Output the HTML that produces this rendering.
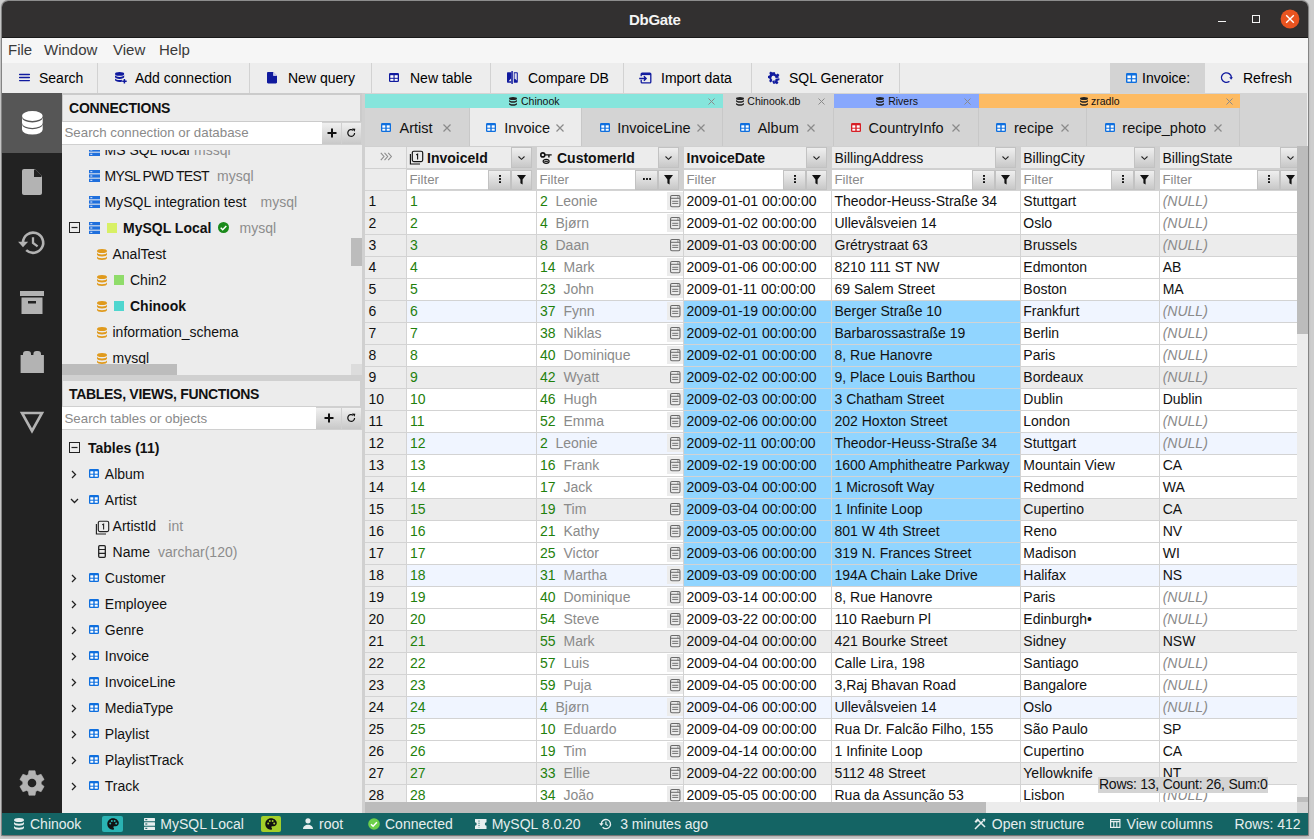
<!DOCTYPE html><html><head><meta charset="utf-8"><style>

html,body{margin:0;padding:0;}
body{width:1314px;height:839px;overflow:hidden;position:relative;background:#e9e9e9;font-family:"Liberation Sans", sans-serif;}
.t{position:absolute;white-space:nowrap;}
.b{position:absolute;}
svg.b{overflow:visible}
.grad{background:linear-gradient(to bottom,#f2f2f2,#c9c9c9);}

</style></head><body>
<div class="b" style="left:0px;top:0px;width:1314px;height:839px;background:#cdcdcd;"></div>
<div class="b" style="left:2px;top:1px;width:1306px;height:834px;box-shadow:0 0 0 1px rgba(0,0,0,0.28),0 1px 3px rgba(0,0,0,0.3);border-radius:6px 6px 0 0;background:#ececec;"></div>
<div class="b" style="left:2px;top:1px;width:1306px;height:37px;background:#323030;border-radius:6px 6px 0 0;"></div>
<div class="b" style="left:2px;top:37px;width:1306px;height:1px;background:#1a1a1a;"></div>
<div class="t " style="left:629px;top:10.00px;font-size:15px;line-height:20px;font-weight:700;color:#f4f4f4;letter-spacing:-0.3px;">DbGate</div>
<div class="b" style="left:1218px;top:20.8px;width:8px;height:1.5px;background:#f4f4f4;"></div>
<div class="b" style="left:1252px;top:15px;width:8px;height:8px;border:1.3px solid #f4f4f4;box-sizing:border-box;"></div>
<svg class="b" style="left:1280px;top:9px;" width="20" height="20" viewBox="0 0 20 20"><circle cx="10" cy="10" r="9.4" fill="#e95420"/><path d="M6.2 6.2 L13.8 13.8 M13.8 6.2 L6.2 13.8" stroke="#fff" stroke-width="1.4"/></svg>
<div class="b" style="left:2px;top:38px;width:1306px;height:25px;background:#f6f6f6;"></div>
<div class="t " style="left:8px;top:39.80px;font-size:15px;line-height:20px;font-weight:400;color:#3a3a3a;">File</div>
<div class="t " style="left:44px;top:39.80px;font-size:15px;line-height:20px;font-weight:400;color:#3a3a3a;">Window</div>
<div class="t " style="left:113px;top:39.80px;font-size:15px;line-height:20px;font-weight:400;color:#3a3a3a;">View</div>
<div class="t " style="left:159px;top:39.80px;font-size:15px;line-height:20px;font-weight:400;color:#3a3a3a;">Help</div>
<div class="b" style="left:2px;top:63px;width:1306px;height:30px;background:#ededed;"></div>
<div class="b" style="left:97px;top:63px;width:1px;height:30px;background:#d2d2d2;"></div>
<div class="b" style="left:249px;top:63px;width:1px;height:30px;background:#d2d2d2;"></div>
<div class="b" style="left:371px;top:63px;width:1px;height:30px;background:#d2d2d2;"></div>
<div class="b" style="left:490px;top:63px;width:1px;height:30px;background:#d2d2d2;"></div>
<div class="b" style="left:623px;top:63px;width:1px;height:30px;background:#d2d2d2;"></div>
<div class="b" style="left:751px;top:63px;width:1px;height:30px;background:#d2d2d2;"></div>
<div class="b" style="left:899px;top:63px;width:1px;height:30px;background:#d2d2d2;"></div>
<div class="b" style="left:1110px;top:63px;width:95px;height:30px;background:#d3d3d3;"></div>
<svg class="b" style="left:19px;top:73px;" width="11" height="9" viewBox="0 0 11 9"><path d="M0.6 1.5h9.8M0.6 4.5h9.8M0.6 7.6h9.8" stroke="#101a9e" stroke-width="1.3" stroke-linecap="round"/></svg>
<div class="t " style="left:39px;top:68.45px;font-size:14px;line-height:20px;font-weight:400;color:#000;">Search</div>
<svg class="b" style="left:114.5px;top:72.4px;" width="12" height="11.5" viewBox="0 0 12 11.5"><ellipse cx="4.6" cy="1.9" rx="4.6" ry="1.9" fill="#101a9e"/><path d="M0 3.1v1.9c0 1 2.1 1.9 4.6 1.9s4.6-.9 4.6-1.9V3.1c0 1-2.1 1.9-4.6 1.9S0 4.1 0 3.1z" fill="#101a9e"/><path d="M0 6.2v1.9c0 1 2.1 1.9 4.6 1.9.9 0 1.6-.1 2.3-.3V7.7c-.7.2-1.5.4-2.3.4C2.1 8.1 0 7.2 0 6.2z" fill="#101a9e"/><path d="M9.4 7v4.5M7.2 9.3h4.5" stroke="#101a9e" stroke-width="1.5"/></svg>
<div class="t " style="left:135px;top:68.45px;font-size:14px;line-height:20px;font-weight:400;color:#000;">Add connection</div>
<svg class="b" style="left:267px;top:72.4px;" width="10" height="11.5" viewBox="0 0 10 11.5"><path d="M0 1.2C0 .5.5 0 1.2 0H6.3L10 3.7v6.6c0 .7-.5 1.2-1.2 1.2H1.2C.5 11.5 0 11 0 10.3z" fill="#101a9e"/><path d="M6.3 0v3.7H10z" fill="#e8e8f4"/><path d="M6.3 0L10 3.7H6.3z" fill="#c8cbe8"/></svg>
<div class="t " style="left:288px;top:68.45px;font-size:14px;line-height:20px;font-weight:400;color:#000;">New query</div>
<svg class="b" style="left:389.1px;top:73px;" width="10" height="9" viewBox="0 0 10 9"><rect x="0" y="0" width="10" height="9" rx="1.3" fill="#101a9e"/><rect x="1.3" y="2.2" width="3.2" height="2.6" fill="#fff"/><rect x="5.6" y="2.2" width="3.1" height="2.6" fill="#fff"/><rect x="1.3" y="5.8" width="3.2" height="2" fill="#fff"/><rect x="5.6" y="5.8" width="3.1" height="2" fill="#fff"/></svg>
<div class="t " style="left:410px;top:68.45px;font-size:14px;line-height:20px;font-weight:400;color:#000;">New table</div>
<svg class="b" style="left:507.2px;top:71px;" width="11" height="13" viewBox="0 0 11 13"><path d="M1 1.2h3.5v10.6H1c-.6 0-1-.4-1-1V2.2c0-.6.4-1 1-1z" fill="#101a9e"/><path d="M1.6 10.2L4 7.6v2.6z" fill="#ededed"/><rect x="4.4" y="0" width="1.4" height="13" fill="#101a9e"/><path d="M6.8 1.2H9.8c.6 0 1 .4 1 1v8.6c0 .6-.4 1-1 1H6.8z" fill="#101a9e"/><path d="M7.6 2.3h2.2V9.6L7.6 7.2z" fill="#dfe0ee"/></svg>
<div class="t " style="left:528px;top:68.45px;font-size:14px;line-height:20px;font-weight:400;color:#000;">Compare DB</div>
<svg class="b" style="left:639px;top:72.8px;" width="12" height="10" viewBox="0 0 12 10"><path d="M2.2 3.2V1.1c0-.6.4-1 1-1h7.6c.6 0 1 .4 1 1v7.8c0 .6-.4 1-1 1H3.2c-.6 0-1-.4-1-1V6.8" stroke="#101a9e" stroke-width="1.3" fill="none"/><rect x="2.2" y="0.1" width="9.6" height="2" fill="#101a9e"/><path d="M0.2 5.5h6.6M4.9 3.3L7.1 5.5 4.9 7.7" stroke="#101a9e" stroke-width="1.4" fill="none"/></svg>
<div class="t " style="left:661px;top:68.45px;font-size:14px;line-height:20px;font-weight:400;color:#000;">Import data</div>
<svg class="b" style="left:768.2px;top:71.9px;" width="11.5" height="12" viewBox="0 0 11.5 12"><path d="M4.5 0h2.5l.4 1.8 1 .5 1.6-1 1.6 1.6-1 1.6.5 1L12 5.9v1.6" stroke="none" fill="none"/><path d="M4.6 0.2h2.4l.3 1.7 1.1.5L9.8 1.4l1.6 1.7-1 1.4.4 1.2-3.3.3A2.1 2.1 0 1 0 4.3 7.7L3.8 9.6 2.6 10.6 1.1 9 1.9 7.7 1.4 6.5 0 6.1V3.9L1.5 3.5 2 2.3 1.2.9 2.8-.5 4.2.6z" fill="#101a9e"/><path d="M7.6 6.8l3.8-.5v1.9l-1.6.4-.3.8 1 1.4-1.6 1.5-1.5-1-.9.4" fill="#101a9e"/><path d="M4.2 9.1l2.5-.9.2 3.6H5.2z" fill="#101a9e"/></svg>
<div class="t " style="left:789px;top:68.45px;font-size:14px;line-height:20px;font-weight:400;color:#000;">SQL Generator</div>
<svg class="b" style="left:1126px;top:73px;" width="11" height="10" viewBox="0 0 11 10"><rect x="0" y="0" width="11" height="10" rx="1.3" fill="#0f6fde"/><rect x="1.4" y="2.5" width="3.4" height="2.7" fill="#fff"/><rect x="6.2" y="2.5" width="3.4" height="2.7" fill="#fff"/><rect x="1.4" y="6.3" width="3.4" height="2.3" fill="#fff"/><rect x="6.2" y="6.3" width="3.4" height="2.3" fill="#fff"/></svg>
<div class="t " style="left:1142px;top:68.45px;font-size:14px;line-height:20px;font-weight:400;color:#000;">Invoice:</div>
<svg class="b" style="left:1221.3px;top:72.2px;" width="12" height="10.6" viewBox="0 0 12 10.6"><path d="M10.4 5.4A5 4.7 0 1 0 8 9.6" stroke="#101a9e" stroke-width="1.3" fill="none" stroke-linecap="round"/><path d="M8.3 5.3h3.6L10.1 7.8z" fill="#101a9e"/></svg>
<div class="t " style="left:1243px;top:68.45px;font-size:14px;line-height:20px;font-weight:400;color:#000;">Refresh</div>
<div class="b" style="left:2px;top:93px;width:60px;height:720px;background:#222222;"></div>
<div class="b" style="left:2px;top:93px;width:60px;height:60px;background:#565656;"></div>
<svg class="b" style="left:22px;top:111px;" width="21" height="24" viewBox="0 0 21 24"><ellipse cx="10.35" cy="5" rx="10.35" ry="5" fill="#fff"/><path d="M0 6.4A10.35 5 0 0 0 20.7 6.4V11.9A10.35 5 0 0 1 0 11.9Z" fill="#fff"/><path d="M0 13.2A10.35 5 0 0 0 20.7 13.2V18.6A10.35 5 0 0 1 0 18.6Z" fill="#fff"/></svg>
<svg class="b" style="left:22px;top:169px;" width="20" height="26" viewBox="0 0 20 26"><path d="M2 0h11l7 7v17c0 1.1-.9 2-2 2H2c-1.1 0-2-.9-2-2V2C0 .9.9 0 2 0z" fill="#b3b3b3"/><path d="M12 0v8h8z" fill="#222"/><path d="M13 0l7 7h-5.5c-.8 0-1.5-.7-1.5-1.5z" fill="#222"/></svg>
<svg class="b" style="left:15px;top:228px;" width="30" height="28" viewBox="0 0 30 28"><path d="M8 14.2A10.1 10.1 0 1 1 11.2 22.1" stroke="#b3b3b3" stroke-width="2.6" fill="none"/><path d="M3.1 13.8h10L8 19.3z" fill="#b3b3b3"/><path d="M18 9.3V15L22.6 18.4" stroke="#b3b3b3" stroke-width="2.3" fill="none"/></svg>
<svg class="b" style="left:20px;top:291px;" width="24" height="23" viewBox="0 0 24 23"><rect x="0" y="0" width="24" height="5" fill="#b3b3b3"/><path d="M1.5 6.5h21V23h-21z" fill="#b3b3b3"/><rect x="8" y="10" width="8" height="2.5" fill="#222"/></svg>
<svg class="b" style="left:20px;top:350px;" width="24" height="23" viewBox="0 0 24 23"><path d="M0.6 5H3V4A3 3 0 0 1 6 1H8A3 3 0 0 1 11 4V5H13.4V4A3 3 0 0 1 16.4 1H18A3 3 0 0 1 21 4V5H23.9V23H0.6Z" fill="#b3b3b3"/></svg>
<svg class="b" style="left:20px;top:411px;" width="24" height="22" viewBox="0 0 24 22"><path d="M2 2h20L12 20z" stroke="#b3b3b3" stroke-width="2.6" fill="none" stroke-linejoin="miter"/></svg>
<svg class="b" style="left:19px;top:770px;" width="26" height="26" viewBox="0 0 26 26"><path d="M9.26 4.60 L9.95 0.77 L16.05 0.77 L16.74 4.60 L17.60 5.03 L18.41 5.56 L18.41 5.56 L22.06 4.25 L25.11 9.53 L22.15 12.04 L22.20 13.00 L22.15 13.96 L22.15 13.96 L25.11 16.47 L22.06 21.75 L18.41 20.44 L17.60 20.97 L16.74 21.40 L16.74 21.40 L16.05 25.23 L9.95 25.23 L9.26 21.40 L8.40 20.97 L7.59 20.44 L7.59 20.44 L3.94 21.75 L0.89 16.47 L3.85 13.96 L3.80 13.00 L3.85 12.04 L3.85 12.04 L0.89 9.53 L3.94 4.25 L7.59 5.56 L8.40 5.03 L9.26 4.60Z" fill="#b3b3b3" stroke="#b3b3b3" stroke-width="0.6" stroke-linejoin="round"/><circle cx="13" cy="13" r="4.3" fill="#222"/></svg>
<div class="b" style="left:62px;top:93px;width:300px;height:720px;background:#ececec;"></div>
<div class="b" style="left:62px;top:93px;width:300px;height:29px;background:#cbcbcb;"></div>
<div class="b" style="left:63px;top:95px;width:297px;height:26px;background:#ececec;"></div>
<div class="t " style="left:69px;top:98.05px;font-size:14px;line-height:20px;font-weight:700;color:#111;letter-spacing:-0.2px;">CONNECTIONS</div>
<div class="b" style="left:62px;top:122px;width:300px;height:22px;background:#d0d0d0;"></div>
<div class="b" style="left:62px;top:122px;width:260px;height:22px;background:#fff;"></div>
<div class="b" style="left:62px;top:144px;width:300px;height:1px;background:#d0d0d0;"></div>
<div class="t " style="left:64.5px;top:122.99px;font-size:13.3px;line-height:20px;font-weight:400;color:#8a8a8a;">Search connection or database</div>
<div class="b" style="left:322px;top:123px;width:19px;height:21px;background:linear-gradient(to bottom,#f0f0f0,#c8c8c8);"></div>
<div class="b" style="left:342px;top:123px;width:19px;height:21px;background:linear-gradient(to bottom,#f0f0f0,#c8c8c8);"></div>
<svg class="b" style="left:327px;top:128px;" width="10" height="10" viewBox="0 0 10 10"><path d="M5 0.5v9M0.5 5h9" stroke="#111" stroke-width="2"/></svg>
<svg class="b" style="left:347px;top:128px;" width="9" height="10" viewBox="0 0 9 10"><path d="M7.6 5A3.4 3.4 0 1 1 6.2 2.2" stroke="#111" stroke-width="1.2" fill="none"/><path d="M5 0.5l3.3.3-.6 3z" fill="#111"/></svg>
<div class="b" style="left:62px;top:150px;width:300px;height:214px;overflow:hidden;">
<svg class="b" style="left:27px;top:-6px;" width="11" height="12" viewBox="0 0 11 12"><rect x="0" y="0" width="11" height="3.3" fill="#1f6fdc"/><rect x="0" y="4.35" width="11" height="3.3" fill="#1f6fdc"/><rect x="0" y="8.7" width="11" height="3.3" fill="#1f6fdc"/><rect x="1.3" y="1.1" width="2" height="1.1" fill="#cfe0ff"/><rect x="1.3" y="5.45" width="2" height="1.1" fill="#cfe0ff"/><rect x="1.3" y="9.8" width="2" height="1.1" fill="#cfe0ff"/></svg>
<div class="t " style="left:42.5px;top:-9.85px;font-size:14px;line-height:20px;font-weight:400;color:#111;">MS SQL local</div>
<svg class="b" style="left:27px;top:20px;" width="11" height="12" viewBox="0 0 11 12"><rect x="0" y="0" width="11" height="3.3" fill="#1f6fdc"/><rect x="0" y="4.35" width="11" height="3.3" fill="#1f6fdc"/><rect x="0" y="8.7" width="11" height="3.3" fill="#1f6fdc"/><rect x="1.3" y="1.1" width="2" height="1.1" fill="#cfe0ff"/><rect x="1.3" y="5.45" width="2" height="1.1" fill="#cfe0ff"/><rect x="1.3" y="9.8" width="2" height="1.1" fill="#cfe0ff"/></svg>
<div class="t " style="left:42.5px;top:16.15px;font-size:14px;line-height:20px;font-weight:400;color:#111;letter-spacing:-0.7px;">MYSL PWD TEST</div>
<svg class="b" style="left:27px;top:46px;" width="11" height="12" viewBox="0 0 11 12"><rect x="0" y="0" width="11" height="3.3" fill="#1f6fdc"/><rect x="0" y="4.35" width="11" height="3.3" fill="#1f6fdc"/><rect x="0" y="8.7" width="11" height="3.3" fill="#1f6fdc"/><rect x="1.3" y="1.1" width="2" height="1.1" fill="#cfe0ff"/><rect x="1.3" y="5.45" width="2" height="1.1" fill="#cfe0ff"/><rect x="1.3" y="9.8" width="2" height="1.1" fill="#cfe0ff"/></svg>
<div class="t " style="left:42.5px;top:42.15px;font-size:14px;line-height:20px;font-weight:400;color:#111;">MySQL integration test</div>
<div class="t " style="left:132px;top:-9.85px;font-size:14px;line-height:20px;font-weight:400;color:#8c8c8c;">mssql</div>
<div class="t " style="left:155px;top:16.15px;font-size:14px;line-height:20px;font-weight:400;color:#8c8c8c;">mysql</div>
<div class="t " style="left:198.5px;top:42.15px;font-size:14px;line-height:20px;font-weight:400;color:#8c8c8c;">mysql</div>
<svg class="b" style="left:7px;top:72px;" width="11" height="11" viewBox="0 0 11 11"><rect x="0.5" y="0.5" width="10" height="10" fill="none" stroke="#222" stroke-width="1"/><path d="M2.5 5.5h6" stroke="#222" stroke-width="1.2"/></svg>
<svg class="b" style="left:27px;top:72px;" width="11" height="12" viewBox="0 0 11 12"><rect x="0" y="0" width="11" height="3.3" fill="#1f6fdc"/><rect x="0" y="4.35" width="11" height="3.3" fill="#1f6fdc"/><rect x="0" y="8.7" width="11" height="3.3" fill="#1f6fdc"/><rect x="1.3" y="1.1" width="2" height="1.1" fill="#cfe0ff"/><rect x="1.3" y="5.45" width="2" height="1.1" fill="#cfe0ff"/><rect x="1.3" y="9.8" width="2" height="1.1" fill="#cfe0ff"/></svg>
<div class="b" style="left:45px;top:73px;width:10px;height:10px;background:#d8f065;"></div>
<div class="t " style="left:61px;top:68.15px;font-size:14px;line-height:20px;font-weight:700;color:#111;">MySQL Local</div>
<svg class="b" style="left:156px;top:72px;" width="11" height="11" viewBox="0 0 11 11"><circle cx="5.5" cy="5.5" r="5.5" fill="#1b8a1b"/><path d="M2.7 5.7l2 2 3.6-3.8" stroke="#fff" stroke-width="1.5" fill="none"/></svg>
<div class="t " style="left:177.5px;top:68.15px;font-size:14px;line-height:20px;font-weight:400;color:#8c8c8c;">mysql</div>
<svg class="b" style="left:35px;top:99px;" width="10" height="11" viewBox="0 0 10 11"><ellipse cx="5" cy="2" rx="5" ry="2" fill="#e09a1c"/><path d="M0 3.6v1.8c0 1.1 2.2 2 5 2s5-.9 5-2V3.6c0 1.1-2.2 2-5 2s-5-.9-5-2z" fill="#e09a1c"/><path d="M0 7.2v1.8c0 1.1 2.2 2 5 2s5-.9 5-2V7.2c0 1.1-2.2 2-5 2s-5-.9-5-2z" fill="#e09a1c"/></svg>
<div class="t " style="left:50.5px;top:94.15px;font-size:14px;line-height:20px;font-weight:400;color:#111;">AnalTest</div>
<svg class="b" style="left:35px;top:125px;" width="10" height="11" viewBox="0 0 10 11"><ellipse cx="5" cy="2" rx="5" ry="2" fill="#e09a1c"/><path d="M0 3.6v1.8c0 1.1 2.2 2 5 2s5-.9 5-2V3.6c0 1.1-2.2 2-5 2s-5-.9-5-2z" fill="#e09a1c"/><path d="M0 7.2v1.8c0 1.1 2.2 2 5 2s5-.9 5-2V7.2c0 1.1-2.2 2-5 2s-5-.9-5-2z" fill="#e09a1c"/></svg>
<div class="b" style="left:52px;top:125px;width:10px;height:10px;background:#8fdc6a;"></div>
<div class="t " style="left:68px;top:120.15px;font-size:14px;line-height:20px;font-weight:400;color:#111;">Chin2</div>
<svg class="b" style="left:35px;top:151px;" width="10" height="11" viewBox="0 0 10 11"><ellipse cx="5" cy="2" rx="5" ry="2" fill="#e09a1c"/><path d="M0 3.6v1.8c0 1.1 2.2 2 5 2s5-.9 5-2V3.6c0 1.1-2.2 2-5 2s-5-.9-5-2z" fill="#e09a1c"/><path d="M0 7.2v1.8c0 1.1 2.2 2 5 2s5-.9 5-2V7.2c0 1.1-2.2 2-5 2s-5-.9-5-2z" fill="#e09a1c"/></svg>
<div class="b" style="left:52px;top:151px;width:10px;height:10px;background:#4fd6cf;"></div>
<div class="t " style="left:68px;top:146.15px;font-size:14px;line-height:20px;font-weight:700;color:#111;">Chinook</div>
<svg class="b" style="left:35px;top:177px;" width="10" height="11" viewBox="0 0 10 11"><ellipse cx="5" cy="2" rx="5" ry="2" fill="#e09a1c"/><path d="M0 3.6v1.8c0 1.1 2.2 2 5 2s5-.9 5-2V3.6c0 1.1-2.2 2-5 2s-5-.9-5-2z" fill="#e09a1c"/><path d="M0 7.2v1.8c0 1.1 2.2 2 5 2s5-.9 5-2V7.2c0 1.1-2.2 2-5 2s-5-.9-5-2z" fill="#e09a1c"/></svg>
<div class="t " style="left:50.5px;top:172.15px;font-size:14px;line-height:20px;font-weight:400;color:#111;">information_schema</div>
<svg class="b" style="left:35px;top:203px;" width="10" height="11" viewBox="0 0 10 11"><ellipse cx="5" cy="2" rx="5" ry="2" fill="#e09a1c"/><path d="M0 3.6v1.8c0 1.1 2.2 2 5 2s5-.9 5-2V3.6c0 1.1-2.2 2-5 2s-5-.9-5-2z" fill="#e09a1c"/><path d="M0 7.2v1.8c0 1.1 2.2 2 5 2s5-.9 5-2V7.2c0 1.1-2.2 2-5 2s-5-.9-5-2z" fill="#e09a1c"/></svg>
<div class="t " style="left:50.5px;top:198.15px;font-size:14px;line-height:20px;font-weight:400;color:#111;">mysql</div>
</div>
<div class="b" style="left:351px;top:238px;width:11px;height:28px;background:#bcbcbc;"></div>
<div class="b" style="left:62px;top:364px;width:289px;height:11px;background:#ececec;"></div>
<div class="b" style="left:62px;top:364px;width:115px;height:11px;background:#bcbcbc;"></div>
<div class="b" style="left:351px;top:364px;width:11px;height:11px;background:#dcdcdc;"></div>
<div class="b" style="left:62px;top:375px;width:300px;height:5px;background:#d0d0d0;"></div>
<div class="b" style="left:362px;top:93px;width:3px;height:720px;background:#d0d0d0;"></div>
<div class="b" style="left:62px;top:380px;width:300px;height:27px;background:#d0d0d0;"></div>
<div class="b" style="left:63px;top:381px;width:297px;height:25px;background:#ececec;"></div>
<div class="t " style="left:69px;top:383.55px;font-size:14px;line-height:20px;font-weight:700;color:#111;letter-spacing:-0.3px;">TABLES, VIEWS, FUNCTIONS</div>
<div class="b" style="left:62px;top:407px;width:300px;height:23px;background:#d0d0d0;"></div>
<div class="b" style="left:62px;top:407px;width:254px;height:22px;background:#fff;"></div>
<div class="t " style="left:64.5px;top:408.89px;font-size:13.3px;line-height:20px;font-weight:400;color:#8a8a8a;">Search tables or objects</div>
<div class="b" style="left:316px;top:408px;width:25px;height:21px;background:linear-gradient(to bottom,#f0f0f0,#c8c8c8);"></div>
<div class="b" style="left:342px;top:408px;width:19px;height:21px;background:linear-gradient(to bottom,#f0f0f0,#c8c8c8);"></div>
<svg class="b" style="left:324px;top:413px;" width="10" height="10" viewBox="0 0 10 10"><path d="M5 0.5v9M0.5 5h9" stroke="#111" stroke-width="2"/></svg>
<svg class="b" style="left:347px;top:413px;" width="9" height="10" viewBox="0 0 9 10"><path d="M7.6 5A3.4 3.4 0 1 1 6.2 2.2" stroke="#111" stroke-width="1.2" fill="none"/><path d="M5 0.5l3.3.3-.6 3z" fill="#111"/></svg>
<svg class="b" style="left:69px;top:442px;" width="11" height="11" viewBox="0 0 11 11"><rect x="0.5" y="0.5" width="10" height="10" fill="none" stroke="#222" stroke-width="1"/><path d="M2.5 5.5h6" stroke="#222" stroke-width="1.2"/></svg>
<div class="t " style="left:88px;top:438.15px;font-size:14px;line-height:20px;font-weight:700;color:#111;">Tables (11)</div>
<svg class="b" style="left:71px;top:470px;" width="6" height="9" viewBox="0 0 6 9"><path d="M1 1l3.5 3.5L1 8" stroke="#222" stroke-width="1.3" fill="none"/></svg>
<svg class="b" style="left:89px;top:469px;" width="10" height="9" viewBox="0 0 10 9"><rect x="0" y="0" width="10" height="9" rx="1.3" fill="#0f6fde"/><rect x="1.3" y="2.3" width="3" height="2.4" fill="#fff"/><rect x="5.7" y="2.3" width="3" height="2.4" fill="#fff"/><rect x="1.3" y="5.7" width="3" height="2" fill="#fff"/><rect x="5.7" y="5.7" width="3" height="2" fill="#fff"/></svg>
<div class="t " style="left:104.8px;top:464.15px;font-size:14px;line-height:20px;font-weight:400;color:#111;">Album</div>
<svg class="b" style="left:70px;top:498px;" width="9" height="6" viewBox="0 0 9 6"><path d="M1 1l3.5 3.5L8 1" stroke="#222" stroke-width="1.3" fill="none"/></svg>
<svg class="b" style="left:89px;top:495px;" width="10" height="9" viewBox="0 0 10 9"><rect x="0" y="0" width="10" height="9" rx="1.3" fill="#0f6fde"/><rect x="1.3" y="2.3" width="3" height="2.4" fill="#fff"/><rect x="5.7" y="2.3" width="3" height="2.4" fill="#fff"/><rect x="1.3" y="5.7" width="3" height="2" fill="#fff"/><rect x="5.7" y="5.7" width="3" height="2" fill="#fff"/></svg>
<div class="t " style="left:104.8px;top:490.15px;font-size:14px;line-height:20px;font-weight:400;color:#111;">Artist</div>
<svg class="b" style="left:71px;top:574px;" width="6" height="9" viewBox="0 0 6 9"><path d="M1 1l3.5 3.5L1 8" stroke="#222" stroke-width="1.3" fill="none"/></svg>
<svg class="b" style="left:89px;top:573px;" width="10" height="9" viewBox="0 0 10 9"><rect x="0" y="0" width="10" height="9" rx="1.3" fill="#0f6fde"/><rect x="1.3" y="2.3" width="3" height="2.4" fill="#fff"/><rect x="5.7" y="2.3" width="3" height="2.4" fill="#fff"/><rect x="1.3" y="5.7" width="3" height="2" fill="#fff"/><rect x="5.7" y="5.7" width="3" height="2" fill="#fff"/></svg>
<div class="t " style="left:104.8px;top:568.15px;font-size:14px;line-height:20px;font-weight:400;color:#111;">Customer</div>
<svg class="b" style="left:71px;top:600px;" width="6" height="9" viewBox="0 0 6 9"><path d="M1 1l3.5 3.5L1 8" stroke="#222" stroke-width="1.3" fill="none"/></svg>
<svg class="b" style="left:89px;top:599px;" width="10" height="9" viewBox="0 0 10 9"><rect x="0" y="0" width="10" height="9" rx="1.3" fill="#0f6fde"/><rect x="1.3" y="2.3" width="3" height="2.4" fill="#fff"/><rect x="5.7" y="2.3" width="3" height="2.4" fill="#fff"/><rect x="1.3" y="5.7" width="3" height="2" fill="#fff"/><rect x="5.7" y="5.7" width="3" height="2" fill="#fff"/></svg>
<div class="t " style="left:104.8px;top:594.15px;font-size:14px;line-height:20px;font-weight:400;color:#111;">Employee</div>
<svg class="b" style="left:71px;top:626px;" width="6" height="9" viewBox="0 0 6 9"><path d="M1 1l3.5 3.5L1 8" stroke="#222" stroke-width="1.3" fill="none"/></svg>
<svg class="b" style="left:89px;top:625px;" width="10" height="9" viewBox="0 0 10 9"><rect x="0" y="0" width="10" height="9" rx="1.3" fill="#0f6fde"/><rect x="1.3" y="2.3" width="3" height="2.4" fill="#fff"/><rect x="5.7" y="2.3" width="3" height="2.4" fill="#fff"/><rect x="1.3" y="5.7" width="3" height="2" fill="#fff"/><rect x="5.7" y="5.7" width="3" height="2" fill="#fff"/></svg>
<div class="t " style="left:104.8px;top:620.15px;font-size:14px;line-height:20px;font-weight:400;color:#111;">Genre</div>
<svg class="b" style="left:71px;top:652px;" width="6" height="9" viewBox="0 0 6 9"><path d="M1 1l3.5 3.5L1 8" stroke="#222" stroke-width="1.3" fill="none"/></svg>
<svg class="b" style="left:89px;top:651px;" width="10" height="9" viewBox="0 0 10 9"><rect x="0" y="0" width="10" height="9" rx="1.3" fill="#0f6fde"/><rect x="1.3" y="2.3" width="3" height="2.4" fill="#fff"/><rect x="5.7" y="2.3" width="3" height="2.4" fill="#fff"/><rect x="1.3" y="5.7" width="3" height="2" fill="#fff"/><rect x="5.7" y="5.7" width="3" height="2" fill="#fff"/></svg>
<div class="t " style="left:104.8px;top:646.15px;font-size:14px;line-height:20px;font-weight:400;color:#111;">Invoice</div>
<svg class="b" style="left:71px;top:678px;" width="6" height="9" viewBox="0 0 6 9"><path d="M1 1l3.5 3.5L1 8" stroke="#222" stroke-width="1.3" fill="none"/></svg>
<svg class="b" style="left:89px;top:677px;" width="10" height="9" viewBox="0 0 10 9"><rect x="0" y="0" width="10" height="9" rx="1.3" fill="#0f6fde"/><rect x="1.3" y="2.3" width="3" height="2.4" fill="#fff"/><rect x="5.7" y="2.3" width="3" height="2.4" fill="#fff"/><rect x="1.3" y="5.7" width="3" height="2" fill="#fff"/><rect x="5.7" y="5.7" width="3" height="2" fill="#fff"/></svg>
<div class="t " style="left:104.8px;top:672.15px;font-size:14px;line-height:20px;font-weight:400;color:#111;">InvoiceLine</div>
<svg class="b" style="left:71px;top:704px;" width="6" height="9" viewBox="0 0 6 9"><path d="M1 1l3.5 3.5L1 8" stroke="#222" stroke-width="1.3" fill="none"/></svg>
<svg class="b" style="left:89px;top:703px;" width="10" height="9" viewBox="0 0 10 9"><rect x="0" y="0" width="10" height="9" rx="1.3" fill="#0f6fde"/><rect x="1.3" y="2.3" width="3" height="2.4" fill="#fff"/><rect x="5.7" y="2.3" width="3" height="2.4" fill="#fff"/><rect x="1.3" y="5.7" width="3" height="2" fill="#fff"/><rect x="5.7" y="5.7" width="3" height="2" fill="#fff"/></svg>
<div class="t " style="left:104.8px;top:698.15px;font-size:14px;line-height:20px;font-weight:400;color:#111;">MediaType</div>
<svg class="b" style="left:71px;top:730px;" width="6" height="9" viewBox="0 0 6 9"><path d="M1 1l3.5 3.5L1 8" stroke="#222" stroke-width="1.3" fill="none"/></svg>
<svg class="b" style="left:89px;top:729px;" width="10" height="9" viewBox="0 0 10 9"><rect x="0" y="0" width="10" height="9" rx="1.3" fill="#0f6fde"/><rect x="1.3" y="2.3" width="3" height="2.4" fill="#fff"/><rect x="5.7" y="2.3" width="3" height="2.4" fill="#fff"/><rect x="1.3" y="5.7" width="3" height="2" fill="#fff"/><rect x="5.7" y="5.7" width="3" height="2" fill="#fff"/></svg>
<div class="t " style="left:104.8px;top:724.15px;font-size:14px;line-height:20px;font-weight:400;color:#111;">Playlist</div>
<svg class="b" style="left:71px;top:756px;" width="6" height="9" viewBox="0 0 6 9"><path d="M1 1l3.5 3.5L1 8" stroke="#222" stroke-width="1.3" fill="none"/></svg>
<svg class="b" style="left:89px;top:755px;" width="10" height="9" viewBox="0 0 10 9"><rect x="0" y="0" width="10" height="9" rx="1.3" fill="#0f6fde"/><rect x="1.3" y="2.3" width="3" height="2.4" fill="#fff"/><rect x="5.7" y="2.3" width="3" height="2.4" fill="#fff"/><rect x="1.3" y="5.7" width="3" height="2" fill="#fff"/><rect x="5.7" y="5.7" width="3" height="2" fill="#fff"/></svg>
<div class="t " style="left:104.8px;top:750.15px;font-size:14px;line-height:20px;font-weight:400;color:#111;">PlaylistTrack</div>
<svg class="b" style="left:71px;top:782px;" width="6" height="9" viewBox="0 0 6 9"><path d="M1 1l3.5 3.5L1 8" stroke="#222" stroke-width="1.3" fill="none"/></svg>
<svg class="b" style="left:89px;top:781px;" width="10" height="9" viewBox="0 0 10 9"><rect x="0" y="0" width="10" height="9" rx="1.3" fill="#0f6fde"/><rect x="1.3" y="2.3" width="3" height="2.4" fill="#fff"/><rect x="5.7" y="2.3" width="3" height="2.4" fill="#fff"/><rect x="1.3" y="5.7" width="3" height="2" fill="#fff"/><rect x="5.7" y="5.7" width="3" height="2" fill="#fff"/></svg>
<div class="t " style="left:104.8px;top:776.15px;font-size:14px;line-height:20px;font-weight:400;color:#111;">Track</div>
<svg class="b" style="left:95px;top:519.5px;" width="15" height="15" viewBox="0 0 15 15"><rect x="3.3" y="1.2" width="10.4" height="10.4" rx="1.5" fill="none" stroke="#222" stroke-width="1.15"/><path d="M1.4 4V14H11" stroke="#222" stroke-width="1.15" fill="none"/><path d="M7.2 4.8L8.6 4.2V9.6" stroke="#222" stroke-width="1.1" fill="none"/></svg>
<div class="t " style="left:112.6px;top:516.15px;font-size:14px;line-height:20px;font-weight:400;color:#111;">ArtistId</div>
<div class="t " style="left:168.3px;top:516.15px;font-size:14px;line-height:20px;font-weight:400;color:#8c8c8c;">int</div>
<svg class="b" style="left:98px;top:545px;" width="8" height="13" viewBox="0 0 8 13"><rect x="0.7" y="0.7" width="6.6" height="11.6" rx="1" fill="none" stroke="#222" stroke-width="1.3"/><path d="M0.7 4.5h6.6M0.7 8.3h6.6" stroke="#222" stroke-width="1.2"/></svg>
<div class="t " style="left:112.6px;top:542.15px;font-size:14px;line-height:20px;font-weight:400;color:#111;">Name</div>
<div class="t " style="left:158px;top:542.15px;font-size:14px;line-height:20px;font-weight:400;color:#8c8c8c;">varchar(120)</div>
<div class="b" style="left:365px;top:93px;width:943px;height:720px;background:#d4d4d4;"></div>
<div class="b" style="left:365px;top:94px;width:358px;height:14px;background:#86e5dc;"></div>
<svg class="b" style="left:509px;top:96.8px;" width="8" height="9" viewBox="0 0 8 9"><ellipse cx="4" cy="1.5" rx="4" ry="1.5" fill="#222"/><path d="M0 2.8v1.5c0 .8 1.8 1.5 4 1.5s4-.7 4-1.5V2.8c0 .8-1.8 1.5-4 1.5S0 3.6 0 2.8z" fill="#222"/><path d="M0 5.7v1.5c0 .8 1.8 1.5 4 1.5s4-.7 4-1.5V5.7c0 .8-1.8 1.5-4 1.5S0 6.5 0 5.7z" fill="#222"/></svg>
<div class="t " style="left:521px;top:91.16px;font-size:10.5px;line-height:20px;font-weight:400;color:#111;">Chinook</div>
<svg class="b" style="left:708px;top:97.5px;" width="7" height="7" viewBox="0 0 7 7"><path d="M0.5 0.5L6.5 6.5M6.5 0.5L0.5 6.5" stroke="#8a8a8a" stroke-width="1"/></svg>
<div class="b" style="left:723px;top:94px;width:111px;height:14px;background:#d4d4d4;"></div>
<svg class="b" style="left:735.5px;top:96.8px;" width="8" height="9" viewBox="0 0 8 9"><ellipse cx="4" cy="1.5" rx="4" ry="1.5" fill="#222"/><path d="M0 2.8v1.5c0 .8 1.8 1.5 4 1.5s4-.7 4-1.5V2.8c0 .8-1.8 1.5-4 1.5S0 3.6 0 2.8z" fill="#222"/><path d="M0 5.7v1.5c0 .8 1.8 1.5 4 1.5s4-.7 4-1.5V5.7c0 .8-1.8 1.5-4 1.5S0 6.5 0 5.7z" fill="#222"/></svg>
<div class="t " style="left:747.3px;top:91.16px;font-size:10.5px;line-height:20px;font-weight:400;color:#111;">Chinook.db</div>
<svg class="b" style="left:818px;top:97.5px;" width="7" height="7" viewBox="0 0 7 7"><path d="M0.5 0.5L6.5 6.5M6.5 0.5L0.5 6.5" stroke="#8a8a8a" stroke-width="1"/></svg>
<div class="b" style="left:834px;top:94px;width:145px;height:14px;background:#88a8fd;"></div>
<svg class="b" style="left:876.4px;top:96.8px;" width="8" height="9" viewBox="0 0 8 9"><ellipse cx="4" cy="1.5" rx="4" ry="1.5" fill="#222"/><path d="M0 2.8v1.5c0 .8 1.8 1.5 4 1.5s4-.7 4-1.5V2.8c0 .8-1.8 1.5-4 1.5S0 3.6 0 2.8z" fill="#222"/><path d="M0 5.7v1.5c0 .8 1.8 1.5 4 1.5s4-.7 4-1.5V5.7c0 .8-1.8 1.5-4 1.5S0 6.5 0 5.7z" fill="#222"/></svg>
<div class="t " style="left:888.2px;top:91.16px;font-size:10.5px;line-height:20px;font-weight:400;color:#111;">Rivers</div>
<svg class="b" style="left:963.6px;top:97.5px;" width="7" height="7" viewBox="0 0 7 7"><path d="M0.5 0.5L6.5 6.5M6.5 0.5L0.5 6.5" stroke="#8a8a8a" stroke-width="1"/></svg>
<div class="b" style="left:979px;top:94px;width:261px;height:14px;background:#fdbb63;"></div>
<svg class="b" style="left:1079.6px;top:96.8px;" width="8" height="9" viewBox="0 0 8 9"><ellipse cx="4" cy="1.5" rx="4" ry="1.5" fill="#222"/><path d="M0 2.8v1.5c0 .8 1.8 1.5 4 1.5s4-.7 4-1.5V2.8c0 .8-1.8 1.5-4 1.5S0 3.6 0 2.8z" fill="#222"/><path d="M0 5.7v1.5c0 .8 1.8 1.5 4 1.5s4-.7 4-1.5V5.7c0 .8-1.8 1.5-4 1.5S0 6.5 0 5.7z" fill="#222"/></svg>
<div class="t " style="left:1091px;top:91.16px;font-size:10.5px;line-height:20px;font-weight:400;color:#111;">zradlo</div>
<svg class="b" style="left:1225.5px;top:97.5px;" width="7" height="7" viewBox="0 0 7 7"><path d="M0.5 0.5L6.5 6.5M6.5 0.5L0.5 6.5" stroke="#8a8a8a" stroke-width="1"/></svg>
<div class="b" style="left:365px;top:108px;width:105px;height:38px;background:#d4d4d4;"></div>
<div class="b" style="left:469px;top:108px;width:1px;height:38px;background:#c8c8c8;"></div>
<svg class="b" style="left:381.4px;top:123px;" width="10" height="9" viewBox="0 0 10 9"><rect x="0" y="0" width="10" height="9" rx="1.3" fill="#0f6fde"/><rect x="1.3" y="2.3" width="3" height="2.4" fill="#fff"/><rect x="5.7" y="2.3" width="3" height="2.4" fill="#fff"/><rect x="1.3" y="5.7" width="3" height="2" fill="#fff"/><rect x="5.7" y="5.7" width="3" height="2" fill="#fff"/></svg>
<div class="t " style="left:399.6px;top:117.68px;font-size:14.5px;line-height:20px;font-weight:400;color:#111;">Artist</div>
<svg class="b" style="left:442.8px;top:124px;" width="8" height="8" viewBox="0 0 8 8"><path d="M0.5 0.5L7.5 7.5M7.5 0.5L0.5 7.5" stroke="#8a8a8a" stroke-width="1.2"/></svg>
<div class="b" style="left:470px;top:108px;width:112px;height:38px;background:#ececec;"></div>
<div class="b" style="left:581px;top:108px;width:1px;height:38px;background:#c8c8c8;"></div>
<svg class="b" style="left:486.3px;top:123px;" width="10" height="9" viewBox="0 0 10 9"><rect x="0" y="0" width="10" height="9" rx="1.3" fill="#0f6fde"/><rect x="1.3" y="2.3" width="3" height="2.4" fill="#fff"/><rect x="5.7" y="2.3" width="3" height="2.4" fill="#fff"/><rect x="1.3" y="5.7" width="3" height="2" fill="#fff"/><rect x="5.7" y="5.7" width="3" height="2" fill="#fff"/></svg>
<div class="t " style="left:504.2px;top:117.68px;font-size:14.5px;line-height:20px;font-weight:400;color:#111;">Invoice</div>
<svg class="b" style="left:556px;top:124px;" width="8" height="8" viewBox="0 0 8 8"><path d="M0.5 0.5L7.5 7.5M7.5 0.5L0.5 7.5" stroke="#8a8a8a" stroke-width="1.2"/></svg>
<div class="b" style="left:582px;top:108px;width:141px;height:38px;background:#d4d4d4;"></div>
<div class="b" style="left:722px;top:108px;width:1px;height:38px;background:#c8c8c8;"></div>
<svg class="b" style="left:600px;top:123px;" width="10" height="9" viewBox="0 0 10 9"><rect x="0" y="0" width="10" height="9" rx="1.3" fill="#0f6fde"/><rect x="1.3" y="2.3" width="3" height="2.4" fill="#fff"/><rect x="5.7" y="2.3" width="3" height="2.4" fill="#fff"/><rect x="1.3" y="5.7" width="3" height="2" fill="#fff"/><rect x="5.7" y="5.7" width="3" height="2" fill="#fff"/></svg>
<div class="t " style="left:617.2px;top:117.68px;font-size:14.5px;line-height:20px;font-weight:400;color:#111;">InvoiceLine</div>
<svg class="b" style="left:696.7px;top:124px;" width="8" height="8" viewBox="0 0 8 8"><path d="M0.5 0.5L7.5 7.5M7.5 0.5L0.5 7.5" stroke="#8a8a8a" stroke-width="1.2"/></svg>
<div class="b" style="left:723px;top:108px;width:111px;height:38px;background:#d4d4d4;"></div>
<div class="b" style="left:833px;top:108px;width:1px;height:38px;background:#c8c8c8;"></div>
<svg class="b" style="left:740px;top:123px;" width="10" height="9" viewBox="0 0 10 9"><rect x="0" y="0" width="10" height="9" rx="1.3" fill="#0f6fde"/><rect x="1.3" y="2.3" width="3" height="2.4" fill="#fff"/><rect x="5.7" y="2.3" width="3" height="2.4" fill="#fff"/><rect x="1.3" y="5.7" width="3" height="2" fill="#fff"/><rect x="5.7" y="5.7" width="3" height="2" fill="#fff"/></svg>
<div class="t " style="left:757.7px;top:117.68px;font-size:14.5px;line-height:20px;font-weight:400;color:#111;">Album</div>
<svg class="b" style="left:806.6px;top:124px;" width="8" height="8" viewBox="0 0 8 8"><path d="M0.5 0.5L7.5 7.5M7.5 0.5L0.5 7.5" stroke="#8a8a8a" stroke-width="1.2"/></svg>
<div class="b" style="left:834px;top:108px;width:145px;height:38px;background:#d4d4d4;"></div>
<div class="b" style="left:978px;top:108px;width:1px;height:38px;background:#c8c8c8;"></div>
<svg class="b" style="left:850.8px;top:123px;" width="10" height="9" viewBox="0 0 10 9"><rect x="0" y="0" width="10" height="9" rx="1.3" fill="#d71f26"/><rect x="1.3" y="2.3" width="3" height="2.4" fill="#fff"/><rect x="5.7" y="2.3" width="3" height="2.4" fill="#fff"/><rect x="1.3" y="5.7" width="3" height="2" fill="#fff"/><rect x="5.7" y="5.7" width="3" height="2" fill="#fff"/></svg>
<div class="t " style="left:868.6px;top:117.68px;font-size:14.5px;line-height:20px;font-weight:400;color:#111;">CountryInfo</div>
<svg class="b" style="left:952.3px;top:124px;" width="8" height="8" viewBox="0 0 8 8"><path d="M0.5 0.5L7.5 7.5M7.5 0.5L0.5 7.5" stroke="#8a8a8a" stroke-width="1.2"/></svg>
<div class="b" style="left:979px;top:108px;width:108px;height:38px;background:#d4d4d4;"></div>
<div class="b" style="left:1086px;top:108px;width:1px;height:38px;background:#c8c8c8;"></div>
<svg class="b" style="left:996.2px;top:123px;" width="10" height="9" viewBox="0 0 10 9"><rect x="0" y="0" width="10" height="9" rx="1.3" fill="#0f6fde"/><rect x="1.3" y="2.3" width="3" height="2.4" fill="#fff"/><rect x="5.7" y="2.3" width="3" height="2.4" fill="#fff"/><rect x="1.3" y="5.7" width="3" height="2" fill="#fff"/><rect x="5.7" y="5.7" width="3" height="2" fill="#fff"/></svg>
<div class="t " style="left:1014px;top:117.68px;font-size:14.5px;line-height:20px;font-weight:400;color:#111;">recipe</div>
<svg class="b" style="left:1061.1px;top:124px;" width="8" height="8" viewBox="0 0 8 8"><path d="M0.5 0.5L7.5 7.5M7.5 0.5L0.5 7.5" stroke="#8a8a8a" stroke-width="1.2"/></svg>
<div class="b" style="left:1087px;top:108px;width:153px;height:38px;background:#d4d4d4;"></div>
<div class="b" style="left:1239px;top:108px;width:1px;height:38px;background:#c8c8c8;"></div>
<svg class="b" style="left:1105px;top:123px;" width="10" height="9" viewBox="0 0 10 9"><rect x="0" y="0" width="10" height="9" rx="1.3" fill="#0f6fde"/><rect x="1.3" y="2.3" width="3" height="2.4" fill="#fff"/><rect x="5.7" y="2.3" width="3" height="2.4" fill="#fff"/><rect x="1.3" y="5.7" width="3" height="2" fill="#fff"/><rect x="5.7" y="5.7" width="3" height="2" fill="#fff"/></svg>
<div class="t " style="left:1122.3px;top:117.68px;font-size:14.5px;line-height:20px;font-weight:400;color:#111;">recipe_photo</div>
<svg class="b" style="left:1214.3px;top:124px;" width="8" height="8" viewBox="0 0 8 8"><path d="M0.5 0.5L7.5 7.5M7.5 0.5L0.5 7.5" stroke="#8a8a8a" stroke-width="1.2"/></svg>
<div class="b" style="left:1307px;top:93px;width:1px;height:720px;background:#f0f0f0;"></div>
<div class="b" style="left:365px;top:146px;width:932px;height:656px;overflow:hidden;background:#fff;">
<div class="b" style="left:0px;top:0px;width:940px;height:44px;background:#d0d0d0;"></div>
<div class="b" style="left:0px;top:1px;width:41px;height:21px;background:#ececec;"></div>
<div class="b" style="left:0px;top:23px;width:41px;height:21px;background:#ececec;"></div>
<div class="b" style="left:42px;top:1px;width:125px;height:21px;background:#ececec;"></div>
<div class="b" style="left:145.5px;top:1px;width:21.5px;height:21px;background:linear-gradient(to bottom,#f1f1f1 0%,#dadada 55%,#c6c6c6 100%);box-shadow:inset 0 0 0 1px #c2c2c2;"></div>
<svg class="b" style="left:153.29999999999995px;top:10px;" width="7" height="4" viewBox="0 0 7 4"><path d="M0.5 0.5L3.5 3.3 6.5 0.5" stroke="#222" stroke-width="1.05" fill="none"/></svg>
<div class="b" style="left:42px;top:24px;width:81px;height:19px;background:#fff;"></div>
<div class="b" style="left:123px;top:23.5px;width:22.5px;height:20px;background:linear-gradient(to bottom,#f1f1f1 0%,#dadada 55%,#c6c6c6 100%);box-shadow:inset 0 0 0 1px #c2c2c2;"></div>
<div class="b" style="left:145.5px;top:23.5px;width:21.5px;height:20px;background:linear-gradient(to bottom,#f1f1f1 0%,#dadada 55%,#c6c6c6 100%);box-shadow:inset 0 0 0 1px #c2c2c2;"></div>
<div class="t " style="left:44.5px;top:23.89px;font-size:13.3px;line-height:20px;font-weight:400;color:#8a8a8a;">Filter</div>
<svg class="b" style="left:151.70000000000005px;top:29px;" width="9" height="10" viewBox="0 0 9 10"><path d="M0 0h9L5.6 4.6V9.6L3.4 8.2V4.6z" fill="#111"/></svg>
<svg class="b" style="left:133.89999999999998px;top:29.19999999999999px;" width="2" height="8" viewBox="0 0 2 8"><rect x="0" y="0" width="2" height="1.8" fill="#111"/><rect x="0" y="3.1" width="2" height="1.8" fill="#111"/><rect x="0" y="6.2" width="2" height="1.8" fill="#111"/></svg>
<div class="b" style="left:172px;top:1px;width:142px;height:21px;background:#ececec;"></div>
<div class="b" style="left:292.5px;top:1px;width:21.5px;height:21px;background:linear-gradient(to bottom,#f1f1f1 0%,#dadada 55%,#c6c6c6 100%);box-shadow:inset 0 0 0 1px #c2c2c2;"></div>
<svg class="b" style="left:300.29999999999995px;top:10px;" width="7" height="4" viewBox="0 0 7 4"><path d="M0.5 0.5L3.5 3.3 6.5 0.5" stroke="#222" stroke-width="1.05" fill="none"/></svg>
<div class="b" style="left:172px;top:24px;width:98px;height:19px;background:#fff;"></div>
<div class="b" style="left:270px;top:23.5px;width:22.5px;height:20px;background:linear-gradient(to bottom,#f1f1f1 0%,#dadada 55%,#c6c6c6 100%);box-shadow:inset 0 0 0 1px #c2c2c2;"></div>
<div class="b" style="left:292.5px;top:23.5px;width:21.5px;height:20px;background:linear-gradient(to bottom,#f1f1f1 0%,#dadada 55%,#c6c6c6 100%);box-shadow:inset 0 0 0 1px #c2c2c2;"></div>
<div class="t " style="left:174.5px;top:23.89px;font-size:13.3px;line-height:20px;font-weight:400;color:#8a8a8a;">Filter</div>
<svg class="b" style="left:298.70000000000005px;top:29px;" width="9" height="10" viewBox="0 0 9 10"><path d="M0 0h9L5.6 4.6V9.6L3.4 8.2V4.6z" fill="#111"/></svg>
<svg class="b" style="left:277.70000000000005px;top:32.19999999999999px;" width="8" height="2" viewBox="0 0 8 2"><rect x="0" y="0" width="1.8" height="2" fill="#111"/><rect x="3.1" y="0" width="1.8" height="2" fill="#111"/><rect x="6.2" y="0" width="1.8" height="2" fill="#111"/></svg>
<div class="b" style="left:319px;top:1px;width:143px;height:21px;background:#ececec;"></div>
<div class="b" style="left:440.5px;top:1px;width:21.5px;height:21px;background:linear-gradient(to bottom,#f1f1f1 0%,#dadada 55%,#c6c6c6 100%);box-shadow:inset 0 0 0 1px #c2c2c2;"></div>
<svg class="b" style="left:448.29999999999995px;top:10px;" width="7" height="4" viewBox="0 0 7 4"><path d="M0.5 0.5L3.5 3.3 6.5 0.5" stroke="#222" stroke-width="1.05" fill="none"/></svg>
<div class="b" style="left:319px;top:24px;width:99px;height:19px;background:#fff;"></div>
<div class="b" style="left:418px;top:23.5px;width:22.5px;height:20px;background:linear-gradient(to bottom,#f1f1f1 0%,#dadada 55%,#c6c6c6 100%);box-shadow:inset 0 0 0 1px #c2c2c2;"></div>
<div class="b" style="left:440.5px;top:23.5px;width:21.5px;height:20px;background:linear-gradient(to bottom,#f1f1f1 0%,#dadada 55%,#c6c6c6 100%);box-shadow:inset 0 0 0 1px #c2c2c2;"></div>
<div class="t " style="left:321.5px;top:23.89px;font-size:13.3px;line-height:20px;font-weight:400;color:#8a8a8a;">Filter</div>
<svg class="b" style="left:446.70000000000005px;top:29px;" width="9" height="10" viewBox="0 0 9 10"><path d="M0 0h9L5.6 4.6V9.6L3.4 8.2V4.6z" fill="#111"/></svg>
<svg class="b" style="left:428.9px;top:29.19999999999999px;" width="2" height="8" viewBox="0 0 2 8"><rect x="0" y="0" width="2" height="1.8" fill="#111"/><rect x="0" y="3.1" width="2" height="1.8" fill="#111"/><rect x="0" y="6.2" width="2" height="1.8" fill="#111"/></svg>
<div class="b" style="left:467px;top:1px;width:184px;height:21px;background:#ececec;"></div>
<div class="b" style="left:629.5px;top:1px;width:21.5px;height:21px;background:linear-gradient(to bottom,#f1f1f1 0%,#dadada 55%,#c6c6c6 100%);box-shadow:inset 0 0 0 1px #c2c2c2;"></div>
<svg class="b" style="left:637.3px;top:10px;" width="7" height="4" viewBox="0 0 7 4"><path d="M0.5 0.5L3.5 3.3 6.5 0.5" stroke="#222" stroke-width="1.05" fill="none"/></svg>
<div class="b" style="left:467px;top:24px;width:140px;height:19px;background:#fff;"></div>
<div class="b" style="left:607px;top:23.5px;width:22.5px;height:20px;background:linear-gradient(to bottom,#f1f1f1 0%,#dadada 55%,#c6c6c6 100%);box-shadow:inset 0 0 0 1px #c2c2c2;"></div>
<div class="b" style="left:629.5px;top:23.5px;width:21.5px;height:20px;background:linear-gradient(to bottom,#f1f1f1 0%,#dadada 55%,#c6c6c6 100%);box-shadow:inset 0 0 0 1px #c2c2c2;"></div>
<div class="t " style="left:469.5px;top:23.89px;font-size:13.3px;line-height:20px;font-weight:400;color:#8a8a8a;">Filter</div>
<svg class="b" style="left:635.7px;top:29px;" width="9" height="10" viewBox="0 0 9 10"><path d="M0 0h9L5.6 4.6V9.6L3.4 8.2V4.6z" fill="#111"/></svg>
<svg class="b" style="left:617.9px;top:29.19999999999999px;" width="2" height="8" viewBox="0 0 2 8"><rect x="0" y="0" width="2" height="1.8" fill="#111"/><rect x="0" y="3.1" width="2" height="1.8" fill="#111"/><rect x="0" y="6.2" width="2" height="1.8" fill="#111"/></svg>
<div class="b" style="left:656px;top:1px;width:134px;height:21px;background:#ececec;"></div>
<div class="b" style="left:768.5px;top:1px;width:21.5px;height:21px;background:linear-gradient(to bottom,#f1f1f1 0%,#dadada 55%,#c6c6c6 100%);box-shadow:inset 0 0 0 1px #c2c2c2;"></div>
<svg class="b" style="left:776.3px;top:10px;" width="7" height="4" viewBox="0 0 7 4"><path d="M0.5 0.5L3.5 3.3 6.5 0.5" stroke="#222" stroke-width="1.05" fill="none"/></svg>
<div class="b" style="left:656px;top:24px;width:90px;height:19px;background:#fff;"></div>
<div class="b" style="left:746px;top:23.5px;width:22.5px;height:20px;background:linear-gradient(to bottom,#f1f1f1 0%,#dadada 55%,#c6c6c6 100%);box-shadow:inset 0 0 0 1px #c2c2c2;"></div>
<div class="b" style="left:768.5px;top:23.5px;width:21.5px;height:20px;background:linear-gradient(to bottom,#f1f1f1 0%,#dadada 55%,#c6c6c6 100%);box-shadow:inset 0 0 0 1px #c2c2c2;"></div>
<div class="t " style="left:658.5px;top:23.89px;font-size:13.3px;line-height:20px;font-weight:400;color:#8a8a8a;">Filter</div>
<svg class="b" style="left:774.7px;top:29px;" width="9" height="10" viewBox="0 0 9 10"><path d="M0 0h9L5.6 4.6V9.6L3.4 8.2V4.6z" fill="#111"/></svg>
<svg class="b" style="left:756.9000000000001px;top:29.19999999999999px;" width="2" height="8" viewBox="0 0 2 8"><rect x="0" y="0" width="2" height="1.8" fill="#111"/><rect x="0" y="3.1" width="2" height="1.8" fill="#111"/><rect x="0" y="6.2" width="2" height="1.8" fill="#111"/></svg>
<div class="b" style="left:795px;top:1px;width:141px;height:21px;background:#ececec;"></div>
<div class="b" style="left:914.5px;top:1px;width:21.5px;height:21px;background:linear-gradient(to bottom,#f1f1f1 0%,#dadada 55%,#c6c6c6 100%);box-shadow:inset 0 0 0 1px #c2c2c2;"></div>
<svg class="b" style="left:922.3px;top:10px;" width="7" height="4" viewBox="0 0 7 4"><path d="M0.5 0.5L3.5 3.3 6.5 0.5" stroke="#222" stroke-width="1.05" fill="none"/></svg>
<div class="b" style="left:795px;top:24px;width:97px;height:19px;background:#fff;"></div>
<div class="b" style="left:892px;top:23.5px;width:22.5px;height:20px;background:linear-gradient(to bottom,#f1f1f1 0%,#dadada 55%,#c6c6c6 100%);box-shadow:inset 0 0 0 1px #c2c2c2;"></div>
<div class="b" style="left:914.5px;top:23.5px;width:21.5px;height:20px;background:linear-gradient(to bottom,#f1f1f1 0%,#dadada 55%,#c6c6c6 100%);box-shadow:inset 0 0 0 1px #c2c2c2;"></div>
<div class="t " style="left:797.5px;top:23.89px;font-size:13.3px;line-height:20px;font-weight:400;color:#8a8a8a;">Filter</div>
<svg class="b" style="left:920.7px;top:29px;" width="9" height="10" viewBox="0 0 9 10"><path d="M0 0h9L5.6 4.6V9.6L3.4 8.2V4.6z" fill="#111"/></svg>
<svg class="b" style="left:902.9000000000001px;top:29.19999999999999px;" width="2" height="8" viewBox="0 0 2 8"><rect x="0" y="0" width="2" height="1.8" fill="#111"/><rect x="0" y="3.1" width="2" height="1.8" fill="#111"/><rect x="0" y="6.2" width="2" height="1.8" fill="#111"/></svg>
<svg class="b" style="left:15px;top:6px;" width="12" height="9" viewBox="0 0 12 9"><path d="M0.8 0.8l3.2 3.7-3.2 3.7M4.5 0.8l3.2 3.7-3.2 3.7M8.2 0.8l3.2 3.7-3.2 3.7" stroke="#8c8c8c" stroke-width="1.1" fill="none"/></svg>
<svg class="b" style="left:44px;top:4px;" width="15" height="15" viewBox="0 0 15 15"><rect x="3.3" y="1.2" width="10.4" height="10.4" rx="1.5" fill="none" stroke="#111" stroke-width="1.15"/><path d="M1.4 4V14H11" stroke="#111" stroke-width="1.15" fill="none"/><path d="M7.2 4.8L8.6 4.2V9.6" stroke="#111" stroke-width="1.1" fill="none"/></svg>
<div class="t " style="left:62px;top:1.75px;font-size:14px;line-height:20px;font-weight:700;color:#111;">InvoiceId</div>
<svg class="b" style="left:174px;top:5px;" width="14" height="13" viewBox="0 0 14 13"><circle cx="3.8" cy="3.9" r="2" fill="none" stroke="#111" stroke-width="1.6"/><path d="M5.8 3.9H12.7M9.9 3.9V6.5" stroke="#111" stroke-width="1.4"/><ellipse cx="7.1" cy="10.3" rx="3" ry="2" fill="none" stroke="#111" stroke-width="1.2"/><path d="M5.3 10.3H8.9" stroke="#111" stroke-width="1.2"/></svg>
<div class="t " style="left:192px;top:1.75px;font-size:14px;line-height:20px;font-weight:700;color:#111;">CustomerId</div>
<div class="t " style="left:321.5px;top:1.75px;font-size:14px;line-height:20px;font-weight:700;color:#111;">InvoiceDate</div>
<div class="t " style="left:469.5px;top:1.75px;font-size:14px;line-height:20px;font-weight:400;color:#111;">BillingAddress</div>
<div class="t " style="left:658.2px;top:1.75px;font-size:14px;line-height:20px;font-weight:400;color:#111;">BillingCity</div>
<div class="t " style="left:797.5px;top:1.75px;font-size:14px;line-height:20px;font-weight:400;color:#111;">BillingState</div>
<div class="b" style="left:0px;top:45px;width:41px;height:21px;background:#ececec;"></div>
<div class="b" style="left:42px;top:45px;width:890px;height:21px;background:#fff;"></div>
<div class="b" style="left:0px;top:44px;width:940px;height:1px;background:#d3d3d3;"></div>
<div class="t " style="left:3.5px;top:45.15px;font-size:14px;line-height:20px;font-weight:400;color:#111;">1</div>
<div class="t " style="left:45px;top:45.15px;font-size:14px;line-height:20px;font-weight:400;color:#1f800c;">1</div>
<div class="t " style="left:175px;top:45.15px;font-size:14px;line-height:20px;font-weight:400;color:#1f800c;">2</div>
<div class="t " style="left:190.5px;top:45.15px;font-size:14px;line-height:20px;font-weight:400;color:#8a8a8a;">Leonie</div>
<div class="b" style="left:302px;top:46px;width:16px;height:18px;background:#ececec;"></div>
<svg class="b" style="left:305px;top:49px;" width="11" height="12" viewBox="0 0 11 12"><rect x="0.55" y="0.55" width="9.4" height="11.2" rx="1.4" fill="none" stroke="#6a6a6a" stroke-width="1.1"/><path d="M0.6 3.3h9.3" stroke="#6a6a6a" stroke-width="1"/><path d="M2.2 6.3h6.1M2.2 8.4h6.1" stroke="#6a6a6a" stroke-width="0.95"/><rect x="7.3" y="1.5" width="1.1" height="1.1" fill="#6a6a6a"/></svg>
<div class="t " style="left:321.5px;top:45.15px;font-size:14px;line-height:20px;font-weight:400;color:#111;">2009-01-01 00:00:00</div>
<div class="t " style="left:469.5px;top:45.15px;font-size:14px;line-height:20px;font-weight:400;color:#111;">Theodor-Heuss-Straße 34</div>
<div class="t " style="left:658.3px;top:45.15px;font-size:14px;line-height:20px;font-weight:400;color:#111;">Stuttgart</div>
<div class="t " style="left:797.7px;top:45.15px;font-size:14px;line-height:20px;font-weight:400;color:#8a8a8a;font-style:italic;">(NULL)</div>
<div class="b" style="left:0px;top:67px;width:41px;height:21px;background:#ececec;"></div>
<div class="b" style="left:42px;top:67px;width:890px;height:21px;background:#fff;"></div>
<div class="b" style="left:0px;top:66px;width:940px;height:1px;background:#d3d3d3;"></div>
<div class="t " style="left:3.5px;top:67.15px;font-size:14px;line-height:20px;font-weight:400;color:#111;">2</div>
<div class="t " style="left:45px;top:67.15px;font-size:14px;line-height:20px;font-weight:400;color:#1f800c;">2</div>
<div class="t " style="left:175px;top:67.15px;font-size:14px;line-height:20px;font-weight:400;color:#1f800c;">4</div>
<div class="t " style="left:190.5px;top:67.15px;font-size:14px;line-height:20px;font-weight:400;color:#8a8a8a;">Bjørn</div>
<div class="b" style="left:302px;top:68px;width:16px;height:18px;background:#ececec;"></div>
<svg class="b" style="left:305px;top:71px;" width="11" height="12" viewBox="0 0 11 12"><rect x="0.55" y="0.55" width="9.4" height="11.2" rx="1.4" fill="none" stroke="#6a6a6a" stroke-width="1.1"/><path d="M0.6 3.3h9.3" stroke="#6a6a6a" stroke-width="1"/><path d="M2.2 6.3h6.1M2.2 8.4h6.1" stroke="#6a6a6a" stroke-width="0.95"/><rect x="7.3" y="1.5" width="1.1" height="1.1" fill="#6a6a6a"/></svg>
<div class="t " style="left:321.5px;top:67.15px;font-size:14px;line-height:20px;font-weight:400;color:#111;">2009-01-02 00:00:00</div>
<div class="t " style="left:469.5px;top:67.15px;font-size:14px;line-height:20px;font-weight:400;color:#111;">Ullevålsveien 14</div>
<div class="t " style="left:658.3px;top:67.15px;font-size:14px;line-height:20px;font-weight:400;color:#111;">Oslo</div>
<div class="t " style="left:797.7px;top:67.15px;font-size:14px;line-height:20px;font-weight:400;color:#8a8a8a;font-style:italic;">(NULL)</div>
<div class="b" style="left:0px;top:89px;width:41px;height:21px;background:#ececec;"></div>
<div class="b" style="left:42px;top:89px;width:890px;height:21px;background:#ececec;"></div>
<div class="b" style="left:0px;top:88px;width:940px;height:1px;background:#d3d3d3;"></div>
<div class="t " style="left:3.5px;top:89.15px;font-size:14px;line-height:20px;font-weight:400;color:#111;">3</div>
<div class="t " style="left:45px;top:89.15px;font-size:14px;line-height:20px;font-weight:400;color:#1f800c;">3</div>
<div class="t " style="left:175px;top:89.15px;font-size:14px;line-height:20px;font-weight:400;color:#1f800c;">8</div>
<div class="t " style="left:190.5px;top:89.15px;font-size:14px;line-height:20px;font-weight:400;color:#8a8a8a;">Daan</div>
<div class="b" style="left:302px;top:90px;width:16px;height:18px;background:#ececec;"></div>
<svg class="b" style="left:305px;top:93px;" width="11" height="12" viewBox="0 0 11 12"><rect x="0.55" y="0.55" width="9.4" height="11.2" rx="1.4" fill="none" stroke="#6a6a6a" stroke-width="1.1"/><path d="M0.6 3.3h9.3" stroke="#6a6a6a" stroke-width="1"/><path d="M2.2 6.3h6.1M2.2 8.4h6.1" stroke="#6a6a6a" stroke-width="0.95"/><rect x="7.3" y="1.5" width="1.1" height="1.1" fill="#6a6a6a"/></svg>
<div class="t " style="left:321.5px;top:89.15px;font-size:14px;line-height:20px;font-weight:400;color:#111;">2009-01-03 00:00:00</div>
<div class="t " style="left:469.5px;top:89.15px;font-size:14px;line-height:20px;font-weight:400;color:#111;">Grétrystraat 63</div>
<div class="t " style="left:658.3px;top:89.15px;font-size:14px;line-height:20px;font-weight:400;color:#111;">Brussels</div>
<div class="t " style="left:797.7px;top:89.15px;font-size:14px;line-height:20px;font-weight:400;color:#8a8a8a;font-style:italic;">(NULL)</div>
<div class="b" style="left:0px;top:111px;width:41px;height:21px;background:#ececec;"></div>
<div class="b" style="left:42px;top:111px;width:890px;height:21px;background:#fff;"></div>
<div class="b" style="left:0px;top:110px;width:940px;height:1px;background:#d3d3d3;"></div>
<div class="t " style="left:3.5px;top:111.15px;font-size:14px;line-height:20px;font-weight:400;color:#111;">4</div>
<div class="t " style="left:45px;top:111.15px;font-size:14px;line-height:20px;font-weight:400;color:#1f800c;">4</div>
<div class="t " style="left:175px;top:111.15px;font-size:14px;line-height:20px;font-weight:400;color:#1f800c;">14</div>
<div class="t " style="left:198.5px;top:111.15px;font-size:14px;line-height:20px;font-weight:400;color:#8a8a8a;">Mark</div>
<div class="b" style="left:302px;top:112px;width:16px;height:18px;background:#ececec;"></div>
<svg class="b" style="left:305px;top:115px;" width="11" height="12" viewBox="0 0 11 12"><rect x="0.55" y="0.55" width="9.4" height="11.2" rx="1.4" fill="none" stroke="#6a6a6a" stroke-width="1.1"/><path d="M0.6 3.3h9.3" stroke="#6a6a6a" stroke-width="1"/><path d="M2.2 6.3h6.1M2.2 8.4h6.1" stroke="#6a6a6a" stroke-width="0.95"/><rect x="7.3" y="1.5" width="1.1" height="1.1" fill="#6a6a6a"/></svg>
<div class="t " style="left:321.5px;top:111.15px;font-size:14px;line-height:20px;font-weight:400;color:#111;">2009-01-06 00:00:00</div>
<div class="t " style="left:469.5px;top:111.15px;font-size:14px;line-height:20px;font-weight:400;color:#111;">8210 111 ST NW</div>
<div class="t " style="left:658.3px;top:111.15px;font-size:14px;line-height:20px;font-weight:400;color:#111;">Edmonton</div>
<div class="t " style="left:797.7px;top:111.15px;font-size:14px;line-height:20px;font-weight:400;color:#111;">AB</div>
<div class="b" style="left:0px;top:133px;width:41px;height:21px;background:#ececec;"></div>
<div class="b" style="left:42px;top:133px;width:890px;height:21px;background:#fff;"></div>
<div class="b" style="left:0px;top:132px;width:940px;height:1px;background:#d3d3d3;"></div>
<div class="t " style="left:3.5px;top:133.15px;font-size:14px;line-height:20px;font-weight:400;color:#111;">5</div>
<div class="t " style="left:45px;top:133.15px;font-size:14px;line-height:20px;font-weight:400;color:#1f800c;">5</div>
<div class="t " style="left:175px;top:133.15px;font-size:14px;line-height:20px;font-weight:400;color:#1f800c;">23</div>
<div class="t " style="left:198.5px;top:133.15px;font-size:14px;line-height:20px;font-weight:400;color:#8a8a8a;">John</div>
<div class="b" style="left:302px;top:134px;width:16px;height:18px;background:#ececec;"></div>
<svg class="b" style="left:305px;top:137px;" width="11" height="12" viewBox="0 0 11 12"><rect x="0.55" y="0.55" width="9.4" height="11.2" rx="1.4" fill="none" stroke="#6a6a6a" stroke-width="1.1"/><path d="M0.6 3.3h9.3" stroke="#6a6a6a" stroke-width="1"/><path d="M2.2 6.3h6.1M2.2 8.4h6.1" stroke="#6a6a6a" stroke-width="0.95"/><rect x="7.3" y="1.5" width="1.1" height="1.1" fill="#6a6a6a"/></svg>
<div class="t " style="left:321.5px;top:133.15px;font-size:14px;line-height:20px;font-weight:400;color:#111;">2009-01-11 00:00:00</div>
<div class="t " style="left:469.5px;top:133.15px;font-size:14px;line-height:20px;font-weight:400;color:#111;">69 Salem Street</div>
<div class="t " style="left:658.3px;top:133.15px;font-size:14px;line-height:20px;font-weight:400;color:#111;">Boston</div>
<div class="t " style="left:797.7px;top:133.15px;font-size:14px;line-height:20px;font-weight:400;color:#111;">MA</div>
<div class="b" style="left:0px;top:155px;width:41px;height:21px;background:#ececec;"></div>
<div class="b" style="left:42px;top:155px;width:890px;height:21px;background:#f0f5ff;"></div>
<div class="b" style="left:319px;top:155px;width:336px;height:21px;background:#91d5ff;"></div>
<div class="b" style="left:0px;top:154px;width:940px;height:1px;background:#d3d3d3;"></div>
<div class="t " style="left:3.5px;top:155.15px;font-size:14px;line-height:20px;font-weight:400;color:#111;">6</div>
<div class="t " style="left:45px;top:155.15px;font-size:14px;line-height:20px;font-weight:400;color:#1f800c;">6</div>
<div class="t " style="left:175px;top:155.15px;font-size:14px;line-height:20px;font-weight:400;color:#1f800c;">37</div>
<div class="t " style="left:198.5px;top:155.15px;font-size:14px;line-height:20px;font-weight:400;color:#8a8a8a;">Fynn</div>
<div class="b" style="left:302px;top:156px;width:16px;height:18px;background:#ececec;"></div>
<svg class="b" style="left:305px;top:159px;" width="11" height="12" viewBox="0 0 11 12"><rect x="0.55" y="0.55" width="9.4" height="11.2" rx="1.4" fill="none" stroke="#6a6a6a" stroke-width="1.1"/><path d="M0.6 3.3h9.3" stroke="#6a6a6a" stroke-width="1"/><path d="M2.2 6.3h6.1M2.2 8.4h6.1" stroke="#6a6a6a" stroke-width="0.95"/><rect x="7.3" y="1.5" width="1.1" height="1.1" fill="#6a6a6a"/></svg>
<div class="t " style="left:321.5px;top:155.15px;font-size:14px;line-height:20px;font-weight:400;color:#111;">2009-01-19 00:00:00</div>
<div class="t " style="left:469.5px;top:155.15px;font-size:14px;line-height:20px;font-weight:400;color:#111;">Berger Straße 10</div>
<div class="t " style="left:658.3px;top:155.15px;font-size:14px;line-height:20px;font-weight:400;color:#111;">Frankfurt</div>
<div class="t " style="left:797.7px;top:155.15px;font-size:14px;line-height:20px;font-weight:400;color:#8a8a8a;font-style:italic;">(NULL)</div>
<div class="b" style="left:0px;top:177px;width:41px;height:21px;background:#ececec;"></div>
<div class="b" style="left:42px;top:177px;width:890px;height:21px;background:#fff;"></div>
<div class="b" style="left:319px;top:177px;width:336px;height:21px;background:#91d5ff;"></div>
<div class="b" style="left:0px;top:176px;width:940px;height:1px;background:#d3d3d3;"></div>
<div class="t " style="left:3.5px;top:177.15px;font-size:14px;line-height:20px;font-weight:400;color:#111;">7</div>
<div class="t " style="left:45px;top:177.15px;font-size:14px;line-height:20px;font-weight:400;color:#1f800c;">7</div>
<div class="t " style="left:175px;top:177.15px;font-size:14px;line-height:20px;font-weight:400;color:#1f800c;">38</div>
<div class="t " style="left:198.5px;top:177.15px;font-size:14px;line-height:20px;font-weight:400;color:#8a8a8a;">Niklas</div>
<div class="b" style="left:302px;top:178px;width:16px;height:18px;background:#ececec;"></div>
<svg class="b" style="left:305px;top:181px;" width="11" height="12" viewBox="0 0 11 12"><rect x="0.55" y="0.55" width="9.4" height="11.2" rx="1.4" fill="none" stroke="#6a6a6a" stroke-width="1.1"/><path d="M0.6 3.3h9.3" stroke="#6a6a6a" stroke-width="1"/><path d="M2.2 6.3h6.1M2.2 8.4h6.1" stroke="#6a6a6a" stroke-width="0.95"/><rect x="7.3" y="1.5" width="1.1" height="1.1" fill="#6a6a6a"/></svg>
<div class="t " style="left:321.5px;top:177.15px;font-size:14px;line-height:20px;font-weight:400;color:#111;">2009-02-01 00:00:00</div>
<div class="t " style="left:469.5px;top:177.15px;font-size:14px;line-height:20px;font-weight:400;color:#111;">Barbarossastraße 19</div>
<div class="t " style="left:658.3px;top:177.15px;font-size:14px;line-height:20px;font-weight:400;color:#111;">Berlin</div>
<div class="t " style="left:797.7px;top:177.15px;font-size:14px;line-height:20px;font-weight:400;color:#8a8a8a;font-style:italic;">(NULL)</div>
<div class="b" style="left:0px;top:199px;width:41px;height:21px;background:#ececec;"></div>
<div class="b" style="left:42px;top:199px;width:890px;height:21px;background:#fff;"></div>
<div class="b" style="left:319px;top:199px;width:336px;height:21px;background:#91d5ff;"></div>
<div class="b" style="left:0px;top:198px;width:940px;height:1px;background:#d3d3d3;"></div>
<div class="t " style="left:3.5px;top:199.15px;font-size:14px;line-height:20px;font-weight:400;color:#111;">8</div>
<div class="t " style="left:45px;top:199.15px;font-size:14px;line-height:20px;font-weight:400;color:#1f800c;">8</div>
<div class="t " style="left:175px;top:199.15px;font-size:14px;line-height:20px;font-weight:400;color:#1f800c;">40</div>
<div class="t " style="left:198.5px;top:199.15px;font-size:14px;line-height:20px;font-weight:400;color:#8a8a8a;">Dominique</div>
<div class="b" style="left:302px;top:200px;width:16px;height:18px;background:#ececec;"></div>
<svg class="b" style="left:305px;top:203px;" width="11" height="12" viewBox="0 0 11 12"><rect x="0.55" y="0.55" width="9.4" height="11.2" rx="1.4" fill="none" stroke="#6a6a6a" stroke-width="1.1"/><path d="M0.6 3.3h9.3" stroke="#6a6a6a" stroke-width="1"/><path d="M2.2 6.3h6.1M2.2 8.4h6.1" stroke="#6a6a6a" stroke-width="0.95"/><rect x="7.3" y="1.5" width="1.1" height="1.1" fill="#6a6a6a"/></svg>
<div class="t " style="left:321.5px;top:199.15px;font-size:14px;line-height:20px;font-weight:400;color:#111;">2009-02-01 00:00:00</div>
<div class="t " style="left:469.5px;top:199.15px;font-size:14px;line-height:20px;font-weight:400;color:#111;">8, Rue Hanovre</div>
<div class="t " style="left:658.3px;top:199.15px;font-size:14px;line-height:20px;font-weight:400;color:#111;">Paris</div>
<div class="t " style="left:797.7px;top:199.15px;font-size:14px;line-height:20px;font-weight:400;color:#8a8a8a;font-style:italic;">(NULL)</div>
<div class="b" style="left:0px;top:221px;width:41px;height:21px;background:#ececec;"></div>
<div class="b" style="left:42px;top:221px;width:890px;height:21px;background:#ececec;"></div>
<div class="b" style="left:319px;top:221px;width:336px;height:21px;background:#91d5ff;"></div>
<div class="b" style="left:0px;top:220px;width:940px;height:1px;background:#d3d3d3;"></div>
<div class="t " style="left:3.5px;top:221.15px;font-size:14px;line-height:20px;font-weight:400;color:#111;">9</div>
<div class="t " style="left:45px;top:221.15px;font-size:14px;line-height:20px;font-weight:400;color:#1f800c;">9</div>
<div class="t " style="left:175px;top:221.15px;font-size:14px;line-height:20px;font-weight:400;color:#1f800c;">42</div>
<div class="t " style="left:198.5px;top:221.15px;font-size:14px;line-height:20px;font-weight:400;color:#8a8a8a;">Wyatt</div>
<div class="b" style="left:302px;top:222px;width:16px;height:18px;background:#ececec;"></div>
<svg class="b" style="left:305px;top:225px;" width="11" height="12" viewBox="0 0 11 12"><rect x="0.55" y="0.55" width="9.4" height="11.2" rx="1.4" fill="none" stroke="#6a6a6a" stroke-width="1.1"/><path d="M0.6 3.3h9.3" stroke="#6a6a6a" stroke-width="1"/><path d="M2.2 6.3h6.1M2.2 8.4h6.1" stroke="#6a6a6a" stroke-width="0.95"/><rect x="7.3" y="1.5" width="1.1" height="1.1" fill="#6a6a6a"/></svg>
<div class="t " style="left:321.5px;top:221.15px;font-size:14px;line-height:20px;font-weight:400;color:#111;">2009-02-02 00:00:00</div>
<div class="t " style="left:469.5px;top:221.15px;font-size:14px;line-height:20px;font-weight:400;color:#111;">9, Place Louis Barthou</div>
<div class="t " style="left:658.3px;top:221.15px;font-size:14px;line-height:20px;font-weight:400;color:#111;">Bordeaux</div>
<div class="t " style="left:797.7px;top:221.15px;font-size:14px;line-height:20px;font-weight:400;color:#8a8a8a;font-style:italic;">(NULL)</div>
<div class="b" style="left:0px;top:243px;width:41px;height:21px;background:#ececec;"></div>
<div class="b" style="left:42px;top:243px;width:890px;height:21px;background:#fff;"></div>
<div class="b" style="left:319px;top:243px;width:336px;height:21px;background:#91d5ff;"></div>
<div class="b" style="left:0px;top:242px;width:940px;height:1px;background:#d3d3d3;"></div>
<div class="t " style="left:3.5px;top:243.15px;font-size:14px;line-height:20px;font-weight:400;color:#111;">10</div>
<div class="t " style="left:45px;top:243.15px;font-size:14px;line-height:20px;font-weight:400;color:#1f800c;">10</div>
<div class="t " style="left:175px;top:243.15px;font-size:14px;line-height:20px;font-weight:400;color:#1f800c;">46</div>
<div class="t " style="left:198.5px;top:243.15px;font-size:14px;line-height:20px;font-weight:400;color:#8a8a8a;">Hugh</div>
<div class="b" style="left:302px;top:244px;width:16px;height:18px;background:#ececec;"></div>
<svg class="b" style="left:305px;top:247px;" width="11" height="12" viewBox="0 0 11 12"><rect x="0.55" y="0.55" width="9.4" height="11.2" rx="1.4" fill="none" stroke="#6a6a6a" stroke-width="1.1"/><path d="M0.6 3.3h9.3" stroke="#6a6a6a" stroke-width="1"/><path d="M2.2 6.3h6.1M2.2 8.4h6.1" stroke="#6a6a6a" stroke-width="0.95"/><rect x="7.3" y="1.5" width="1.1" height="1.1" fill="#6a6a6a"/></svg>
<div class="t " style="left:321.5px;top:243.15px;font-size:14px;line-height:20px;font-weight:400;color:#111;">2009-02-03 00:00:00</div>
<div class="t " style="left:469.5px;top:243.15px;font-size:14px;line-height:20px;font-weight:400;color:#111;">3 Chatham Street</div>
<div class="t " style="left:658.3px;top:243.15px;font-size:14px;line-height:20px;font-weight:400;color:#111;">Dublin</div>
<div class="t " style="left:797.7px;top:243.15px;font-size:14px;line-height:20px;font-weight:400;color:#111;">Dublin</div>
<div class="b" style="left:0px;top:265px;width:41px;height:21px;background:#ececec;"></div>
<div class="b" style="left:42px;top:265px;width:890px;height:21px;background:#fff;"></div>
<div class="b" style="left:319px;top:265px;width:336px;height:21px;background:#91d5ff;"></div>
<div class="b" style="left:0px;top:264px;width:940px;height:1px;background:#d3d3d3;"></div>
<div class="t " style="left:3.5px;top:265.15px;font-size:14px;line-height:20px;font-weight:400;color:#111;">11</div>
<div class="t " style="left:45px;top:265.15px;font-size:14px;line-height:20px;font-weight:400;color:#1f800c;">11</div>
<div class="t " style="left:175px;top:265.15px;font-size:14px;line-height:20px;font-weight:400;color:#1f800c;">52</div>
<div class="t " style="left:198.5px;top:265.15px;font-size:14px;line-height:20px;font-weight:400;color:#8a8a8a;">Emma</div>
<div class="b" style="left:302px;top:266px;width:16px;height:18px;background:#ececec;"></div>
<svg class="b" style="left:305px;top:269px;" width="11" height="12" viewBox="0 0 11 12"><rect x="0.55" y="0.55" width="9.4" height="11.2" rx="1.4" fill="none" stroke="#6a6a6a" stroke-width="1.1"/><path d="M0.6 3.3h9.3" stroke="#6a6a6a" stroke-width="1"/><path d="M2.2 6.3h6.1M2.2 8.4h6.1" stroke="#6a6a6a" stroke-width="0.95"/><rect x="7.3" y="1.5" width="1.1" height="1.1" fill="#6a6a6a"/></svg>
<div class="t " style="left:321.5px;top:265.15px;font-size:14px;line-height:20px;font-weight:400;color:#111;">2009-02-06 00:00:00</div>
<div class="t " style="left:469.5px;top:265.15px;font-size:14px;line-height:20px;font-weight:400;color:#111;">202 Hoxton Street</div>
<div class="t " style="left:658.3px;top:265.15px;font-size:14px;line-height:20px;font-weight:400;color:#111;">London</div>
<div class="t " style="left:797.7px;top:265.15px;font-size:14px;line-height:20px;font-weight:400;color:#8a8a8a;font-style:italic;">(NULL)</div>
<div class="b" style="left:0px;top:287px;width:41px;height:21px;background:#ececec;"></div>
<div class="b" style="left:42px;top:287px;width:890px;height:21px;background:#f0f5ff;"></div>
<div class="b" style="left:319px;top:287px;width:336px;height:21px;background:#91d5ff;"></div>
<div class="b" style="left:0px;top:286px;width:940px;height:1px;background:#d3d3d3;"></div>
<div class="t " style="left:3.5px;top:287.15px;font-size:14px;line-height:20px;font-weight:400;color:#111;">12</div>
<div class="t " style="left:45px;top:287.15px;font-size:14px;line-height:20px;font-weight:400;color:#1f800c;">12</div>
<div class="t " style="left:175px;top:287.15px;font-size:14px;line-height:20px;font-weight:400;color:#1f800c;">2</div>
<div class="t " style="left:190.5px;top:287.15px;font-size:14px;line-height:20px;font-weight:400;color:#8a8a8a;">Leonie</div>
<div class="b" style="left:302px;top:288px;width:16px;height:18px;background:#ececec;"></div>
<svg class="b" style="left:305px;top:291px;" width="11" height="12" viewBox="0 0 11 12"><rect x="0.55" y="0.55" width="9.4" height="11.2" rx="1.4" fill="none" stroke="#6a6a6a" stroke-width="1.1"/><path d="M0.6 3.3h9.3" stroke="#6a6a6a" stroke-width="1"/><path d="M2.2 6.3h6.1M2.2 8.4h6.1" stroke="#6a6a6a" stroke-width="0.95"/><rect x="7.3" y="1.5" width="1.1" height="1.1" fill="#6a6a6a"/></svg>
<div class="t " style="left:321.5px;top:287.15px;font-size:14px;line-height:20px;font-weight:400;color:#111;">2009-02-11 00:00:00</div>
<div class="t " style="left:469.5px;top:287.15px;font-size:14px;line-height:20px;font-weight:400;color:#111;">Theodor-Heuss-Straße 34</div>
<div class="t " style="left:658.3px;top:287.15px;font-size:14px;line-height:20px;font-weight:400;color:#111;">Stuttgart</div>
<div class="t " style="left:797.7px;top:287.15px;font-size:14px;line-height:20px;font-weight:400;color:#8a8a8a;font-style:italic;">(NULL)</div>
<div class="b" style="left:0px;top:309px;width:41px;height:21px;background:#ececec;"></div>
<div class="b" style="left:42px;top:309px;width:890px;height:21px;background:#fff;"></div>
<div class="b" style="left:319px;top:309px;width:336px;height:21px;background:#91d5ff;"></div>
<div class="b" style="left:0px;top:308px;width:940px;height:1px;background:#d3d3d3;"></div>
<div class="t " style="left:3.5px;top:309.15px;font-size:14px;line-height:20px;font-weight:400;color:#111;">13</div>
<div class="t " style="left:45px;top:309.15px;font-size:14px;line-height:20px;font-weight:400;color:#1f800c;">13</div>
<div class="t " style="left:175px;top:309.15px;font-size:14px;line-height:20px;font-weight:400;color:#1f800c;">16</div>
<div class="t " style="left:198.5px;top:309.15px;font-size:14px;line-height:20px;font-weight:400;color:#8a8a8a;">Frank</div>
<div class="b" style="left:302px;top:310px;width:16px;height:18px;background:#ececec;"></div>
<svg class="b" style="left:305px;top:313px;" width="11" height="12" viewBox="0 0 11 12"><rect x="0.55" y="0.55" width="9.4" height="11.2" rx="1.4" fill="none" stroke="#6a6a6a" stroke-width="1.1"/><path d="M0.6 3.3h9.3" stroke="#6a6a6a" stroke-width="1"/><path d="M2.2 6.3h6.1M2.2 8.4h6.1" stroke="#6a6a6a" stroke-width="0.95"/><rect x="7.3" y="1.5" width="1.1" height="1.1" fill="#6a6a6a"/></svg>
<div class="t " style="left:321.5px;top:309.15px;font-size:14px;line-height:20px;font-weight:400;color:#111;">2009-02-19 00:00:00</div>
<div class="t " style="left:469.5px;top:309.15px;font-size:14px;line-height:20px;font-weight:400;color:#111;">1600 Amphitheatre Parkway</div>
<div class="t " style="left:658.3px;top:309.15px;font-size:14px;line-height:20px;font-weight:400;color:#111;">Mountain View</div>
<div class="t " style="left:797.7px;top:309.15px;font-size:14px;line-height:20px;font-weight:400;color:#111;">CA</div>
<div class="b" style="left:0px;top:331px;width:41px;height:21px;background:#ececec;"></div>
<div class="b" style="left:42px;top:331px;width:890px;height:21px;background:#fff;"></div>
<div class="b" style="left:319px;top:331px;width:336px;height:21px;background:#91d5ff;"></div>
<div class="b" style="left:0px;top:330px;width:940px;height:1px;background:#d3d3d3;"></div>
<div class="t " style="left:3.5px;top:331.15px;font-size:14px;line-height:20px;font-weight:400;color:#111;">14</div>
<div class="t " style="left:45px;top:331.15px;font-size:14px;line-height:20px;font-weight:400;color:#1f800c;">14</div>
<div class="t " style="left:175px;top:331.15px;font-size:14px;line-height:20px;font-weight:400;color:#1f800c;">17</div>
<div class="t " style="left:198.5px;top:331.15px;font-size:14px;line-height:20px;font-weight:400;color:#8a8a8a;">Jack</div>
<div class="b" style="left:302px;top:332px;width:16px;height:18px;background:#ececec;"></div>
<svg class="b" style="left:305px;top:335px;" width="11" height="12" viewBox="0 0 11 12"><rect x="0.55" y="0.55" width="9.4" height="11.2" rx="1.4" fill="none" stroke="#6a6a6a" stroke-width="1.1"/><path d="M0.6 3.3h9.3" stroke="#6a6a6a" stroke-width="1"/><path d="M2.2 6.3h6.1M2.2 8.4h6.1" stroke="#6a6a6a" stroke-width="0.95"/><rect x="7.3" y="1.5" width="1.1" height="1.1" fill="#6a6a6a"/></svg>
<div class="t " style="left:321.5px;top:331.15px;font-size:14px;line-height:20px;font-weight:400;color:#111;">2009-03-04 00:00:00</div>
<div class="t " style="left:469.5px;top:331.15px;font-size:14px;line-height:20px;font-weight:400;color:#111;">1 Microsoft Way</div>
<div class="t " style="left:658.3px;top:331.15px;font-size:14px;line-height:20px;font-weight:400;color:#111;">Redmond</div>
<div class="t " style="left:797.7px;top:331.15px;font-size:14px;line-height:20px;font-weight:400;color:#111;">WA</div>
<div class="b" style="left:0px;top:353px;width:41px;height:21px;background:#ececec;"></div>
<div class="b" style="left:42px;top:353px;width:890px;height:21px;background:#ececec;"></div>
<div class="b" style="left:319px;top:353px;width:336px;height:21px;background:#91d5ff;"></div>
<div class="b" style="left:0px;top:352px;width:940px;height:1px;background:#d3d3d3;"></div>
<div class="t " style="left:3.5px;top:353.15px;font-size:14px;line-height:20px;font-weight:400;color:#111;">15</div>
<div class="t " style="left:45px;top:353.15px;font-size:14px;line-height:20px;font-weight:400;color:#1f800c;">15</div>
<div class="t " style="left:175px;top:353.15px;font-size:14px;line-height:20px;font-weight:400;color:#1f800c;">19</div>
<div class="t " style="left:198.5px;top:353.15px;font-size:14px;line-height:20px;font-weight:400;color:#8a8a8a;">Tim</div>
<div class="b" style="left:302px;top:354px;width:16px;height:18px;background:#ececec;"></div>
<svg class="b" style="left:305px;top:357px;" width="11" height="12" viewBox="0 0 11 12"><rect x="0.55" y="0.55" width="9.4" height="11.2" rx="1.4" fill="none" stroke="#6a6a6a" stroke-width="1.1"/><path d="M0.6 3.3h9.3" stroke="#6a6a6a" stroke-width="1"/><path d="M2.2 6.3h6.1M2.2 8.4h6.1" stroke="#6a6a6a" stroke-width="0.95"/><rect x="7.3" y="1.5" width="1.1" height="1.1" fill="#6a6a6a"/></svg>
<div class="t " style="left:321.5px;top:353.15px;font-size:14px;line-height:20px;font-weight:400;color:#111;">2009-03-04 00:00:00</div>
<div class="t " style="left:469.5px;top:353.15px;font-size:14px;line-height:20px;font-weight:400;color:#111;">1 Infinite Loop</div>
<div class="t " style="left:658.3px;top:353.15px;font-size:14px;line-height:20px;font-weight:400;color:#111;">Cupertino</div>
<div class="t " style="left:797.7px;top:353.15px;font-size:14px;line-height:20px;font-weight:400;color:#111;">CA</div>
<div class="b" style="left:0px;top:375px;width:41px;height:21px;background:#ececec;"></div>
<div class="b" style="left:42px;top:375px;width:890px;height:21px;background:#fff;"></div>
<div class="b" style="left:319px;top:375px;width:336px;height:21px;background:#91d5ff;"></div>
<div class="b" style="left:0px;top:374px;width:940px;height:1px;background:#d3d3d3;"></div>
<div class="t " style="left:3.5px;top:375.15px;font-size:14px;line-height:20px;font-weight:400;color:#111;">16</div>
<div class="t " style="left:45px;top:375.15px;font-size:14px;line-height:20px;font-weight:400;color:#1f800c;">16</div>
<div class="t " style="left:175px;top:375.15px;font-size:14px;line-height:20px;font-weight:400;color:#1f800c;">21</div>
<div class="t " style="left:198.5px;top:375.15px;font-size:14px;line-height:20px;font-weight:400;color:#8a8a8a;">Kathy</div>
<div class="b" style="left:302px;top:376px;width:16px;height:18px;background:#ececec;"></div>
<svg class="b" style="left:305px;top:379px;" width="11" height="12" viewBox="0 0 11 12"><rect x="0.55" y="0.55" width="9.4" height="11.2" rx="1.4" fill="none" stroke="#6a6a6a" stroke-width="1.1"/><path d="M0.6 3.3h9.3" stroke="#6a6a6a" stroke-width="1"/><path d="M2.2 6.3h6.1M2.2 8.4h6.1" stroke="#6a6a6a" stroke-width="0.95"/><rect x="7.3" y="1.5" width="1.1" height="1.1" fill="#6a6a6a"/></svg>
<div class="t " style="left:321.5px;top:375.15px;font-size:14px;line-height:20px;font-weight:400;color:#111;">2009-03-05 00:00:00</div>
<div class="t " style="left:469.5px;top:375.15px;font-size:14px;line-height:20px;font-weight:400;color:#111;">801 W 4th Street</div>
<div class="t " style="left:658.3px;top:375.15px;font-size:14px;line-height:20px;font-weight:400;color:#111;">Reno</div>
<div class="t " style="left:797.7px;top:375.15px;font-size:14px;line-height:20px;font-weight:400;color:#111;">NV</div>
<div class="b" style="left:0px;top:397px;width:41px;height:21px;background:#ececec;"></div>
<div class="b" style="left:42px;top:397px;width:890px;height:21px;background:#fff;"></div>
<div class="b" style="left:319px;top:397px;width:336px;height:21px;background:#91d5ff;"></div>
<div class="b" style="left:0px;top:396px;width:940px;height:1px;background:#d3d3d3;"></div>
<div class="t " style="left:3.5px;top:397.15px;font-size:14px;line-height:20px;font-weight:400;color:#111;">17</div>
<div class="t " style="left:45px;top:397.15px;font-size:14px;line-height:20px;font-weight:400;color:#1f800c;">17</div>
<div class="t " style="left:175px;top:397.15px;font-size:14px;line-height:20px;font-weight:400;color:#1f800c;">25</div>
<div class="t " style="left:198.5px;top:397.15px;font-size:14px;line-height:20px;font-weight:400;color:#8a8a8a;">Victor</div>
<div class="b" style="left:302px;top:398px;width:16px;height:18px;background:#ececec;"></div>
<svg class="b" style="left:305px;top:401px;" width="11" height="12" viewBox="0 0 11 12"><rect x="0.55" y="0.55" width="9.4" height="11.2" rx="1.4" fill="none" stroke="#6a6a6a" stroke-width="1.1"/><path d="M0.6 3.3h9.3" stroke="#6a6a6a" stroke-width="1"/><path d="M2.2 6.3h6.1M2.2 8.4h6.1" stroke="#6a6a6a" stroke-width="0.95"/><rect x="7.3" y="1.5" width="1.1" height="1.1" fill="#6a6a6a"/></svg>
<div class="t " style="left:321.5px;top:397.15px;font-size:14px;line-height:20px;font-weight:400;color:#111;">2009-03-06 00:00:00</div>
<div class="t " style="left:469.5px;top:397.15px;font-size:14px;line-height:20px;font-weight:400;color:#111;">319 N. Frances Street</div>
<div class="t " style="left:658.3px;top:397.15px;font-size:14px;line-height:20px;font-weight:400;color:#111;">Madison</div>
<div class="t " style="left:797.7px;top:397.15px;font-size:14px;line-height:20px;font-weight:400;color:#111;">WI</div>
<div class="b" style="left:0px;top:419px;width:41px;height:21px;background:#ececec;"></div>
<div class="b" style="left:42px;top:419px;width:890px;height:21px;background:#f0f5ff;"></div>
<div class="b" style="left:319px;top:419px;width:336px;height:21px;background:#91d5ff;"></div>
<div class="b" style="left:0px;top:418px;width:940px;height:1px;background:#d3d3d3;"></div>
<div class="t " style="left:3.5px;top:419.15px;font-size:14px;line-height:20px;font-weight:400;color:#111;">18</div>
<div class="t " style="left:45px;top:419.15px;font-size:14px;line-height:20px;font-weight:400;color:#1f800c;">18</div>
<div class="t " style="left:175px;top:419.15px;font-size:14px;line-height:20px;font-weight:400;color:#1f800c;">31</div>
<div class="t " style="left:198.5px;top:419.15px;font-size:14px;line-height:20px;font-weight:400;color:#8a8a8a;">Martha</div>
<div class="b" style="left:302px;top:420px;width:16px;height:18px;background:#ececec;"></div>
<svg class="b" style="left:305px;top:423px;" width="11" height="12" viewBox="0 0 11 12"><rect x="0.55" y="0.55" width="9.4" height="11.2" rx="1.4" fill="none" stroke="#6a6a6a" stroke-width="1.1"/><path d="M0.6 3.3h9.3" stroke="#6a6a6a" stroke-width="1"/><path d="M2.2 6.3h6.1M2.2 8.4h6.1" stroke="#6a6a6a" stroke-width="0.95"/><rect x="7.3" y="1.5" width="1.1" height="1.1" fill="#6a6a6a"/></svg>
<div class="t " style="left:321.5px;top:419.15px;font-size:14px;line-height:20px;font-weight:400;color:#111;">2009-03-09 00:00:00</div>
<div class="t " style="left:469.5px;top:419.15px;font-size:14px;line-height:20px;font-weight:400;color:#111;">194A Chain Lake Drive</div>
<div class="t " style="left:658.3px;top:419.15px;font-size:14px;line-height:20px;font-weight:400;color:#111;">Halifax</div>
<div class="t " style="left:797.7px;top:419.15px;font-size:14px;line-height:20px;font-weight:400;color:#111;">NS</div>
<div class="b" style="left:0px;top:441px;width:41px;height:21px;background:#ececec;"></div>
<div class="b" style="left:42px;top:441px;width:890px;height:21px;background:#fff;"></div>
<div class="b" style="left:0px;top:440px;width:940px;height:1px;background:#d3d3d3;"></div>
<div class="t " style="left:3.5px;top:441.15px;font-size:14px;line-height:20px;font-weight:400;color:#111;">19</div>
<div class="t " style="left:45px;top:441.15px;font-size:14px;line-height:20px;font-weight:400;color:#1f800c;">19</div>
<div class="t " style="left:175px;top:441.15px;font-size:14px;line-height:20px;font-weight:400;color:#1f800c;">40</div>
<div class="t " style="left:198.5px;top:441.15px;font-size:14px;line-height:20px;font-weight:400;color:#8a8a8a;">Dominique</div>
<div class="b" style="left:302px;top:442px;width:16px;height:18px;background:#ececec;"></div>
<svg class="b" style="left:305px;top:445px;" width="11" height="12" viewBox="0 0 11 12"><rect x="0.55" y="0.55" width="9.4" height="11.2" rx="1.4" fill="none" stroke="#6a6a6a" stroke-width="1.1"/><path d="M0.6 3.3h9.3" stroke="#6a6a6a" stroke-width="1"/><path d="M2.2 6.3h6.1M2.2 8.4h6.1" stroke="#6a6a6a" stroke-width="0.95"/><rect x="7.3" y="1.5" width="1.1" height="1.1" fill="#6a6a6a"/></svg>
<div class="t " style="left:321.5px;top:441.15px;font-size:14px;line-height:20px;font-weight:400;color:#111;">2009-03-14 00:00:00</div>
<div class="t " style="left:469.5px;top:441.15px;font-size:14px;line-height:20px;font-weight:400;color:#111;">8, Rue Hanovre</div>
<div class="t " style="left:658.3px;top:441.15px;font-size:14px;line-height:20px;font-weight:400;color:#111;">Paris</div>
<div class="t " style="left:797.7px;top:441.15px;font-size:14px;line-height:20px;font-weight:400;color:#8a8a8a;font-style:italic;">(NULL)</div>
<div class="b" style="left:0px;top:463px;width:41px;height:21px;background:#ececec;"></div>
<div class="b" style="left:42px;top:463px;width:890px;height:21px;background:#fff;"></div>
<div class="b" style="left:0px;top:462px;width:940px;height:1px;background:#d3d3d3;"></div>
<div class="t " style="left:3.5px;top:463.15px;font-size:14px;line-height:20px;font-weight:400;color:#111;">20</div>
<div class="t " style="left:45px;top:463.15px;font-size:14px;line-height:20px;font-weight:400;color:#1f800c;">20</div>
<div class="t " style="left:175px;top:463.15px;font-size:14px;line-height:20px;font-weight:400;color:#1f800c;">54</div>
<div class="t " style="left:198.5px;top:463.15px;font-size:14px;line-height:20px;font-weight:400;color:#8a8a8a;">Steve</div>
<div class="b" style="left:302px;top:464px;width:16px;height:18px;background:#ececec;"></div>
<svg class="b" style="left:305px;top:467px;" width="11" height="12" viewBox="0 0 11 12"><rect x="0.55" y="0.55" width="9.4" height="11.2" rx="1.4" fill="none" stroke="#6a6a6a" stroke-width="1.1"/><path d="M0.6 3.3h9.3" stroke="#6a6a6a" stroke-width="1"/><path d="M2.2 6.3h6.1M2.2 8.4h6.1" stroke="#6a6a6a" stroke-width="0.95"/><rect x="7.3" y="1.5" width="1.1" height="1.1" fill="#6a6a6a"/></svg>
<div class="t " style="left:321.5px;top:463.15px;font-size:14px;line-height:20px;font-weight:400;color:#111;">2009-03-22 00:00:00</div>
<div class="t " style="left:469.5px;top:463.15px;font-size:14px;line-height:20px;font-weight:400;color:#111;">110 Raeburn Pl</div>
<div class="t " style="left:658.3px;top:463.15px;font-size:14px;line-height:20px;font-weight:400;color:#111;">Edinburgh•</div>
<div class="t " style="left:797.7px;top:463.15px;font-size:14px;line-height:20px;font-weight:400;color:#8a8a8a;font-style:italic;">(NULL)</div>
<div class="b" style="left:0px;top:485px;width:41px;height:21px;background:#ececec;"></div>
<div class="b" style="left:42px;top:485px;width:890px;height:21px;background:#ececec;"></div>
<div class="b" style="left:0px;top:484px;width:940px;height:1px;background:#d3d3d3;"></div>
<div class="t " style="left:3.5px;top:485.15px;font-size:14px;line-height:20px;font-weight:400;color:#111;">21</div>
<div class="t " style="left:45px;top:485.15px;font-size:14px;line-height:20px;font-weight:400;color:#1f800c;">21</div>
<div class="t " style="left:175px;top:485.15px;font-size:14px;line-height:20px;font-weight:400;color:#1f800c;">55</div>
<div class="t " style="left:198.5px;top:485.15px;font-size:14px;line-height:20px;font-weight:400;color:#8a8a8a;">Mark</div>
<div class="b" style="left:302px;top:486px;width:16px;height:18px;background:#ececec;"></div>
<svg class="b" style="left:305px;top:489px;" width="11" height="12" viewBox="0 0 11 12"><rect x="0.55" y="0.55" width="9.4" height="11.2" rx="1.4" fill="none" stroke="#6a6a6a" stroke-width="1.1"/><path d="M0.6 3.3h9.3" stroke="#6a6a6a" stroke-width="1"/><path d="M2.2 6.3h6.1M2.2 8.4h6.1" stroke="#6a6a6a" stroke-width="0.95"/><rect x="7.3" y="1.5" width="1.1" height="1.1" fill="#6a6a6a"/></svg>
<div class="t " style="left:321.5px;top:485.15px;font-size:14px;line-height:20px;font-weight:400;color:#111;">2009-04-04 00:00:00</div>
<div class="t " style="left:469.5px;top:485.15px;font-size:14px;line-height:20px;font-weight:400;color:#111;">421 Bourke Street</div>
<div class="t " style="left:658.3px;top:485.15px;font-size:14px;line-height:20px;font-weight:400;color:#111;">Sidney</div>
<div class="t " style="left:797.7px;top:485.15px;font-size:14px;line-height:20px;font-weight:400;color:#111;">NSW</div>
<div class="b" style="left:0px;top:507px;width:41px;height:21px;background:#ececec;"></div>
<div class="b" style="left:42px;top:507px;width:890px;height:21px;background:#fff;"></div>
<div class="b" style="left:0px;top:506px;width:940px;height:1px;background:#d3d3d3;"></div>
<div class="t " style="left:3.5px;top:507.15px;font-size:14px;line-height:20px;font-weight:400;color:#111;">22</div>
<div class="t " style="left:45px;top:507.15px;font-size:14px;line-height:20px;font-weight:400;color:#1f800c;">22</div>
<div class="t " style="left:175px;top:507.15px;font-size:14px;line-height:20px;font-weight:400;color:#1f800c;">57</div>
<div class="t " style="left:198.5px;top:507.15px;font-size:14px;line-height:20px;font-weight:400;color:#8a8a8a;">Luis</div>
<div class="b" style="left:302px;top:508px;width:16px;height:18px;background:#ececec;"></div>
<svg class="b" style="left:305px;top:511px;" width="11" height="12" viewBox="0 0 11 12"><rect x="0.55" y="0.55" width="9.4" height="11.2" rx="1.4" fill="none" stroke="#6a6a6a" stroke-width="1.1"/><path d="M0.6 3.3h9.3" stroke="#6a6a6a" stroke-width="1"/><path d="M2.2 6.3h6.1M2.2 8.4h6.1" stroke="#6a6a6a" stroke-width="0.95"/><rect x="7.3" y="1.5" width="1.1" height="1.1" fill="#6a6a6a"/></svg>
<div class="t " style="left:321.5px;top:507.15px;font-size:14px;line-height:20px;font-weight:400;color:#111;">2009-04-04 00:00:00</div>
<div class="t " style="left:469.5px;top:507.15px;font-size:14px;line-height:20px;font-weight:400;color:#111;">Calle Lira, 198</div>
<div class="t " style="left:658.3px;top:507.15px;font-size:14px;line-height:20px;font-weight:400;color:#111;">Santiago</div>
<div class="t " style="left:797.7px;top:507.15px;font-size:14px;line-height:20px;font-weight:400;color:#8a8a8a;font-style:italic;">(NULL)</div>
<div class="b" style="left:0px;top:529px;width:41px;height:21px;background:#ececec;"></div>
<div class="b" style="left:42px;top:529px;width:890px;height:21px;background:#fff;"></div>
<div class="b" style="left:0px;top:528px;width:940px;height:1px;background:#d3d3d3;"></div>
<div class="t " style="left:3.5px;top:529.15px;font-size:14px;line-height:20px;font-weight:400;color:#111;">23</div>
<div class="t " style="left:45px;top:529.15px;font-size:14px;line-height:20px;font-weight:400;color:#1f800c;">23</div>
<div class="t " style="left:175px;top:529.15px;font-size:14px;line-height:20px;font-weight:400;color:#1f800c;">59</div>
<div class="t " style="left:198.5px;top:529.15px;font-size:14px;line-height:20px;font-weight:400;color:#8a8a8a;">Puja</div>
<div class="b" style="left:302px;top:530px;width:16px;height:18px;background:#ececec;"></div>
<svg class="b" style="left:305px;top:533px;" width="11" height="12" viewBox="0 0 11 12"><rect x="0.55" y="0.55" width="9.4" height="11.2" rx="1.4" fill="none" stroke="#6a6a6a" stroke-width="1.1"/><path d="M0.6 3.3h9.3" stroke="#6a6a6a" stroke-width="1"/><path d="M2.2 6.3h6.1M2.2 8.4h6.1" stroke="#6a6a6a" stroke-width="0.95"/><rect x="7.3" y="1.5" width="1.1" height="1.1" fill="#6a6a6a"/></svg>
<div class="t " style="left:321.5px;top:529.15px;font-size:14px;line-height:20px;font-weight:400;color:#111;">2009-04-05 00:00:00</div>
<div class="t " style="left:469.5px;top:529.15px;font-size:14px;line-height:20px;font-weight:400;color:#111;">3,Raj Bhavan Road</div>
<div class="t " style="left:658.3px;top:529.15px;font-size:14px;line-height:20px;font-weight:400;color:#111;">Bangalore</div>
<div class="t " style="left:797.7px;top:529.15px;font-size:14px;line-height:20px;font-weight:400;color:#8a8a8a;font-style:italic;">(NULL)</div>
<div class="b" style="left:0px;top:551px;width:41px;height:21px;background:#ececec;"></div>
<div class="b" style="left:42px;top:551px;width:890px;height:21px;background:#f0f5ff;"></div>
<div class="b" style="left:0px;top:550px;width:940px;height:1px;background:#d3d3d3;"></div>
<div class="t " style="left:3.5px;top:551.15px;font-size:14px;line-height:20px;font-weight:400;color:#111;">24</div>
<div class="t " style="left:45px;top:551.15px;font-size:14px;line-height:20px;font-weight:400;color:#1f800c;">24</div>
<div class="t " style="left:175px;top:551.15px;font-size:14px;line-height:20px;font-weight:400;color:#1f800c;">4</div>
<div class="t " style="left:190.5px;top:551.15px;font-size:14px;line-height:20px;font-weight:400;color:#8a8a8a;">Bjørn</div>
<div class="b" style="left:302px;top:552px;width:16px;height:18px;background:#ececec;"></div>
<svg class="b" style="left:305px;top:555px;" width="11" height="12" viewBox="0 0 11 12"><rect x="0.55" y="0.55" width="9.4" height="11.2" rx="1.4" fill="none" stroke="#6a6a6a" stroke-width="1.1"/><path d="M0.6 3.3h9.3" stroke="#6a6a6a" stroke-width="1"/><path d="M2.2 6.3h6.1M2.2 8.4h6.1" stroke="#6a6a6a" stroke-width="0.95"/><rect x="7.3" y="1.5" width="1.1" height="1.1" fill="#6a6a6a"/></svg>
<div class="t " style="left:321.5px;top:551.15px;font-size:14px;line-height:20px;font-weight:400;color:#111;">2009-04-06 00:00:00</div>
<div class="t " style="left:469.5px;top:551.15px;font-size:14px;line-height:20px;font-weight:400;color:#111;">Ullevålsveien 14</div>
<div class="t " style="left:658.3px;top:551.15px;font-size:14px;line-height:20px;font-weight:400;color:#111;">Oslo</div>
<div class="t " style="left:797.7px;top:551.15px;font-size:14px;line-height:20px;font-weight:400;color:#8a8a8a;font-style:italic;">(NULL)</div>
<div class="b" style="left:0px;top:573px;width:41px;height:21px;background:#ececec;"></div>
<div class="b" style="left:42px;top:573px;width:890px;height:21px;background:#fff;"></div>
<div class="b" style="left:0px;top:572px;width:940px;height:1px;background:#d3d3d3;"></div>
<div class="t " style="left:3.5px;top:573.15px;font-size:14px;line-height:20px;font-weight:400;color:#111;">25</div>
<div class="t " style="left:45px;top:573.15px;font-size:14px;line-height:20px;font-weight:400;color:#1f800c;">25</div>
<div class="t " style="left:175px;top:573.15px;font-size:14px;line-height:20px;font-weight:400;color:#1f800c;">10</div>
<div class="t " style="left:198.5px;top:573.15px;font-size:14px;line-height:20px;font-weight:400;color:#8a8a8a;">Eduardo</div>
<div class="b" style="left:302px;top:574px;width:16px;height:18px;background:#ececec;"></div>
<svg class="b" style="left:305px;top:577px;" width="11" height="12" viewBox="0 0 11 12"><rect x="0.55" y="0.55" width="9.4" height="11.2" rx="1.4" fill="none" stroke="#6a6a6a" stroke-width="1.1"/><path d="M0.6 3.3h9.3" stroke="#6a6a6a" stroke-width="1"/><path d="M2.2 6.3h6.1M2.2 8.4h6.1" stroke="#6a6a6a" stroke-width="0.95"/><rect x="7.3" y="1.5" width="1.1" height="1.1" fill="#6a6a6a"/></svg>
<div class="t " style="left:321.5px;top:573.15px;font-size:14px;line-height:20px;font-weight:400;color:#111;">2009-04-09 00:00:00</div>
<div class="t " style="left:469.5px;top:573.15px;font-size:14px;line-height:20px;font-weight:400;color:#111;">Rua Dr. Falcão Filho, 155</div>
<div class="t " style="left:658.3px;top:573.15px;font-size:14px;line-height:20px;font-weight:400;color:#111;">São Paulo</div>
<div class="t " style="left:797.7px;top:573.15px;font-size:14px;line-height:20px;font-weight:400;color:#111;">SP</div>
<div class="b" style="left:0px;top:595px;width:41px;height:21px;background:#ececec;"></div>
<div class="b" style="left:42px;top:595px;width:890px;height:21px;background:#fff;"></div>
<div class="b" style="left:0px;top:594px;width:940px;height:1px;background:#d3d3d3;"></div>
<div class="t " style="left:3.5px;top:595.15px;font-size:14px;line-height:20px;font-weight:400;color:#111;">26</div>
<div class="t " style="left:45px;top:595.15px;font-size:14px;line-height:20px;font-weight:400;color:#1f800c;">26</div>
<div class="t " style="left:175px;top:595.15px;font-size:14px;line-height:20px;font-weight:400;color:#1f800c;">19</div>
<div class="t " style="left:198.5px;top:595.15px;font-size:14px;line-height:20px;font-weight:400;color:#8a8a8a;">Tim</div>
<div class="b" style="left:302px;top:596px;width:16px;height:18px;background:#ececec;"></div>
<svg class="b" style="left:305px;top:599px;" width="11" height="12" viewBox="0 0 11 12"><rect x="0.55" y="0.55" width="9.4" height="11.2" rx="1.4" fill="none" stroke="#6a6a6a" stroke-width="1.1"/><path d="M0.6 3.3h9.3" stroke="#6a6a6a" stroke-width="1"/><path d="M2.2 6.3h6.1M2.2 8.4h6.1" stroke="#6a6a6a" stroke-width="0.95"/><rect x="7.3" y="1.5" width="1.1" height="1.1" fill="#6a6a6a"/></svg>
<div class="t " style="left:321.5px;top:595.15px;font-size:14px;line-height:20px;font-weight:400;color:#111;">2009-04-14 00:00:00</div>
<div class="t " style="left:469.5px;top:595.15px;font-size:14px;line-height:20px;font-weight:400;color:#111;">1 Infinite Loop</div>
<div class="t " style="left:658.3px;top:595.15px;font-size:14px;line-height:20px;font-weight:400;color:#111;">Cupertino</div>
<div class="t " style="left:797.7px;top:595.15px;font-size:14px;line-height:20px;font-weight:400;color:#111;">CA</div>
<div class="b" style="left:0px;top:617px;width:41px;height:21px;background:#ececec;"></div>
<div class="b" style="left:42px;top:617px;width:890px;height:21px;background:#ececec;"></div>
<div class="b" style="left:0px;top:616px;width:940px;height:1px;background:#d3d3d3;"></div>
<div class="t " style="left:3.5px;top:617.15px;font-size:14px;line-height:20px;font-weight:400;color:#111;">27</div>
<div class="t " style="left:45px;top:617.15px;font-size:14px;line-height:20px;font-weight:400;color:#1f800c;">27</div>
<div class="t " style="left:175px;top:617.15px;font-size:14px;line-height:20px;font-weight:400;color:#1f800c;">33</div>
<div class="t " style="left:198.5px;top:617.15px;font-size:14px;line-height:20px;font-weight:400;color:#8a8a8a;">Ellie</div>
<div class="b" style="left:302px;top:618px;width:16px;height:18px;background:#ececec;"></div>
<svg class="b" style="left:305px;top:621px;" width="11" height="12" viewBox="0 0 11 12"><rect x="0.55" y="0.55" width="9.4" height="11.2" rx="1.4" fill="none" stroke="#6a6a6a" stroke-width="1.1"/><path d="M0.6 3.3h9.3" stroke="#6a6a6a" stroke-width="1"/><path d="M2.2 6.3h6.1M2.2 8.4h6.1" stroke="#6a6a6a" stroke-width="0.95"/><rect x="7.3" y="1.5" width="1.1" height="1.1" fill="#6a6a6a"/></svg>
<div class="t " style="left:321.5px;top:617.15px;font-size:14px;line-height:20px;font-weight:400;color:#111;">2009-04-22 00:00:00</div>
<div class="t " style="left:469.5px;top:617.15px;font-size:14px;line-height:20px;font-weight:400;color:#111;">5112 48 Street</div>
<div class="t " style="left:658.3px;top:617.15px;font-size:14px;line-height:20px;font-weight:400;color:#111;">Yellowknife</div>
<div class="t " style="left:797.7px;top:617.15px;font-size:14px;line-height:20px;font-weight:400;color:#111;">NT</div>
<div class="b" style="left:0px;top:639px;width:41px;height:21px;background:#ececec;"></div>
<div class="b" style="left:42px;top:639px;width:890px;height:21px;background:#fff;"></div>
<div class="b" style="left:0px;top:638px;width:940px;height:1px;background:#d3d3d3;"></div>
<div class="t " style="left:3.5px;top:639.15px;font-size:14px;line-height:20px;font-weight:400;color:#111;">28</div>
<div class="t " style="left:45px;top:639.15px;font-size:14px;line-height:20px;font-weight:400;color:#1f800c;">28</div>
<div class="t " style="left:175px;top:639.15px;font-size:14px;line-height:20px;font-weight:400;color:#1f800c;">34</div>
<div class="t " style="left:198.5px;top:639.15px;font-size:14px;line-height:20px;font-weight:400;color:#8a8a8a;">João</div>
<div class="b" style="left:302px;top:640px;width:16px;height:18px;background:#ececec;"></div>
<svg class="b" style="left:305px;top:643px;" width="11" height="12" viewBox="0 0 11 12"><rect x="0.55" y="0.55" width="9.4" height="11.2" rx="1.4" fill="none" stroke="#6a6a6a" stroke-width="1.1"/><path d="M0.6 3.3h9.3" stroke="#6a6a6a" stroke-width="1"/><path d="M2.2 6.3h6.1M2.2 8.4h6.1" stroke="#6a6a6a" stroke-width="0.95"/><rect x="7.3" y="1.5" width="1.1" height="1.1" fill="#6a6a6a"/></svg>
<div class="t " style="left:321.5px;top:639.15px;font-size:14px;line-height:20px;font-weight:400;color:#111;">2009-05-05 00:00:00</div>
<div class="t " style="left:469.5px;top:639.15px;font-size:14px;line-height:20px;font-weight:400;color:#111;">Rua da Assunção 53</div>
<div class="t " style="left:658.3px;top:639.15px;font-size:14px;line-height:20px;font-weight:400;color:#111;">Lisbon</div>
<div class="t " style="left:797.7px;top:639.15px;font-size:14px;line-height:20px;font-weight:400;color:#8a8a8a;font-style:italic;">(NULL)</div>
<div class="b" style="left:41px;top:44px;width:1px;height:620px;background:#d3d3d3;"></div>
<div class="b" style="left:171px;top:44px;width:1px;height:620px;background:#d3d3d3;"></div>
<div class="b" style="left:318px;top:44px;width:1px;height:620px;background:#d3d3d3;"></div>
<div class="b" style="left:466px;top:44px;width:1px;height:620px;background:#d3d3d3;"></div>
<div class="b" style="left:655px;top:44px;width:1px;height:620px;background:#d3d3d3;"></div>
<div class="b" style="left:794px;top:44px;width:1px;height:620px;background:#d3d3d3;"></div>
<div class="b" style="left:0px;top:0px;width:940px;height:1px;background:#d0d0d0;"></div>
</div>
<div class="b" style="left:1098px;top:777px;width:170px;height:16px;background:#d4d4d4;"></div>
<div class="t " style="left:1099px;top:774.45px;font-size:14px;line-height:20px;font-weight:400;color:#111;letter-spacing:-0.25px;">Rows: 13, Count: 26, Sum:0</div>
<div class="b" style="left:1297px;top:146px;width:11px;height:656px;background:#ececec;"></div>
<div class="b" style="left:1297px;top:146px;width:11px;height:188px;background:#bcbcbc;"></div>
<div class="b" style="left:1297px;top:797px;width:11px;height:5px;background:#bcbcbc;"></div>
<div class="b" style="left:365px;top:802px;width:932px;height:11px;background:#ececec;"></div>
<div class="b" style="left:365px;top:802px;width:621px;height:11px;background:#bcbcbc;"></div>
<div class="b" style="left:1297px;top:802px;width:11px;height:11px;background:#d4d4d4;"></div>
<div class="b" style="left:2px;top:813px;width:1306px;height:22px;background:#146464;"></div>
<svg class="b" style="left:14px;top:818px;" width="10" height="12" viewBox="0 0 10 12"><ellipse cx="5" cy="2" rx="5" ry="2" fill="#e6eeee"/><path d="M0 3.8v2c0 1.1 2.2 2 5 2s5-.9 5-2v-2c0 1.1-2.2 2-5 2s-5-.9-5-2z" fill="#e6eeee"/><path d="M0 7.7v2c0 1.1 2.2 2 5 2s5-.9 5-2v-2c0 1.1-2.2 2-5 2s-5-.9-5-2z" fill="#e6eeee"/></svg>
<div class="t " style="left:30px;top:814.15px;font-size:14px;line-height:20px;font-weight:400;color:#e6eeee;">Chinook</div>
<div class="b" style="left:102px;top:815.5px;width:20.5px;height:16.5px;background:#2ab3b3;border-radius:2px;"></div>
<svg class="b" style="left:106.5px;top:818px;" width="12" height="12" viewBox="0 0 12 12"><path d="M6 0.3C2.8 0.3 0.3 2.8 0.3 6s2.5 5.7 5.7 5.7c.6 0 1-.4 1-1 0-.3-.1-.5-.3-.7-.2-.2-.3-.4-.3-.7 0-.6.4-1 1-1h1.2c1.8 0 3.2-1.4 3.2-3.2C11.8 2.5 9.2.3 6 .3z" fill="#111"/><circle cx="3.2" cy="5.6" r="1" fill="#2ab3b3"/><circle cx="4.8" cy="3.1" r="1" fill="#2ab3b3"/><circle cx="7.6" cy="3.1" r="1" fill="#2ab3b3"/><circle cx="9.2" cy="5.4" r="1" fill="#2ab3b3"/></svg>
<svg class="b" style="left:143.7px;top:818px;" width="11" height="12" viewBox="0 0 11 12"><rect x="0" y="0" width="11" height="3.3" rx="0.5" fill="#e6eeee"/><rect x="0" y="4.35" width="11" height="3.3" rx="0.5" fill="#e6eeee"/><rect x="0" y="8.7" width="11" height="3.3" rx="0.5" fill="#e6eeee"/><rect x="1.3" y="1.1" width="2" height="1.1" fill="#146464"/><rect x="1.3" y="5.45" width="2" height="1.1" fill="#146464"/><rect x="1.3" y="9.8" width="2" height="1.1" fill="#146464"/></svg>
<div class="t " style="left:160.3px;top:814.15px;font-size:14px;line-height:20px;font-weight:400;color:#e6eeee;">MySQL Local</div>
<div class="b" style="left:261.3px;top:815.5px;width:19.7px;height:16.5px;background:#a3cf2a;border-radius:2px;"></div>
<svg class="b" style="left:265px;top:818px;" width="12" height="12" viewBox="0 0 12 12"><path d="M6 0.3C2.8 0.3 0.3 2.8 0.3 6s2.5 5.7 5.7 5.7c.6 0 1-.4 1-1 0-.3-.1-.5-.3-.7-.2-.2-.3-.4-.3-.7 0-.6.4-1 1-1h1.2c1.8 0 3.2-1.4 3.2-3.2C11.8 2.5 9.2.3 6 .3z" fill="#111"/><circle cx="3.2" cy="5.6" r="1" fill="#a3cf2a"/><circle cx="4.8" cy="3.1" r="1" fill="#a3cf2a"/><circle cx="7.6" cy="3.1" r="1" fill="#a3cf2a"/><circle cx="9.2" cy="5.4" r="1" fill="#a3cf2a"/></svg>
<svg class="b" style="left:303px;top:818px;" width="10" height="11" viewBox="0 0 10 11"><circle cx="5" cy="2.8" r="2.6" fill="#e6eeee"/><path d="M0 11c0-2.5 2.2-4.2 5-4.2s5 1.7 5 4.2z" fill="#e6eeee"/></svg>
<div class="t " style="left:319px;top:814.15px;font-size:14px;line-height:20px;font-weight:400;color:#e6eeee;">root</div>
<svg class="b" style="left:368px;top:818px;" width="12" height="12" viewBox="0 0 12 12"><circle cx="6" cy="6" r="5.8" fill="#6ccf4a"/><path d="M3 6.2l2.1 2.1 3.8-4" stroke="#fff" stroke-width="1.5" fill="none"/></svg>
<div class="t " style="left:385px;top:814.15px;font-size:14px;line-height:20px;font-weight:400;color:#e6eeee;">Connected</div>
<svg class="b" style="left:474.5px;top:819px;" width="11.5" height="10" viewBox="0 0 11.5 10"><path d="M0 0h11.5v3.3a1.7 1.7 0 0 0 0 3.4V10H0V6.7a1.7 1.7 0 0 0 0-3.4z" fill="#e6eeee"/><path d="M4 1.5v7" stroke="#146464" stroke-width="0.9" stroke-dasharray="1.2 1"/></svg>
<div class="t " style="left:491.7px;top:814.15px;font-size:14px;line-height:20px;font-weight:400;color:#e6eeee;">MySQL 8.0.20</div>
<svg class="b" style="left:598.5px;top:818px;" width="12" height="12" viewBox="0 0 12 12"><path d="M2.3 6A4.6 4.6 0 1 1 3.6 9.3" stroke="#e6eeee" stroke-width="1.3" fill="none"/><path d="M0 5.2h4.6L2.3 8z" fill="#e6eeee"/><path d="M6.9 3.6v2.8l2 1.2" stroke="#e6eeee" stroke-width="1.2" fill="none"/></svg>
<div class="t " style="left:620.2px;top:814.15px;font-size:14px;line-height:20px;font-weight:400;color:#e6eeee;">3 minutes ago</div>
<svg class="b" style="left:974px;top:818px;" width="12" height="12" viewBox="0 0 12 12"><path d="M1 11L9 3M3 1l8 8" stroke="#e6eeee" stroke-width="1.6"/><path d="M8 1.5l2.5-1 1 1-1 2.5z" fill="#e6eeee"/><path d="M0.5 3.5l3-3 1.5 1.5-3 3z" fill="#e6eeee"/></svg>
<div class="t " style="left:991.8px;top:814.15px;font-size:14px;line-height:20px;font-weight:400;color:#e6eeee;">Open structure</div>
<svg class="b" style="left:1110px;top:819px;" width="10.5" height="9" viewBox="0 0 10.5 9"><rect x="0.6" y="0.6" width="9.3" height="7.8" fill="none" stroke="#e6eeee" stroke-width="1.2"/><path d="M0.6 2.6h9.3M3.8 2.6v5.8M6.8 2.6v5.8" stroke="#e6eeee" stroke-width="1.1"/></svg>
<div class="t " style="left:1126.6px;top:814.15px;font-size:14px;line-height:20px;font-weight:400;color:#e6eeee;">View columns</div>
<div class="t " style="left:1234.4px;top:814.15px;font-size:14px;line-height:20px;font-weight:400;color:#e6eeee;">Rows: 412</div>
</body></html>
